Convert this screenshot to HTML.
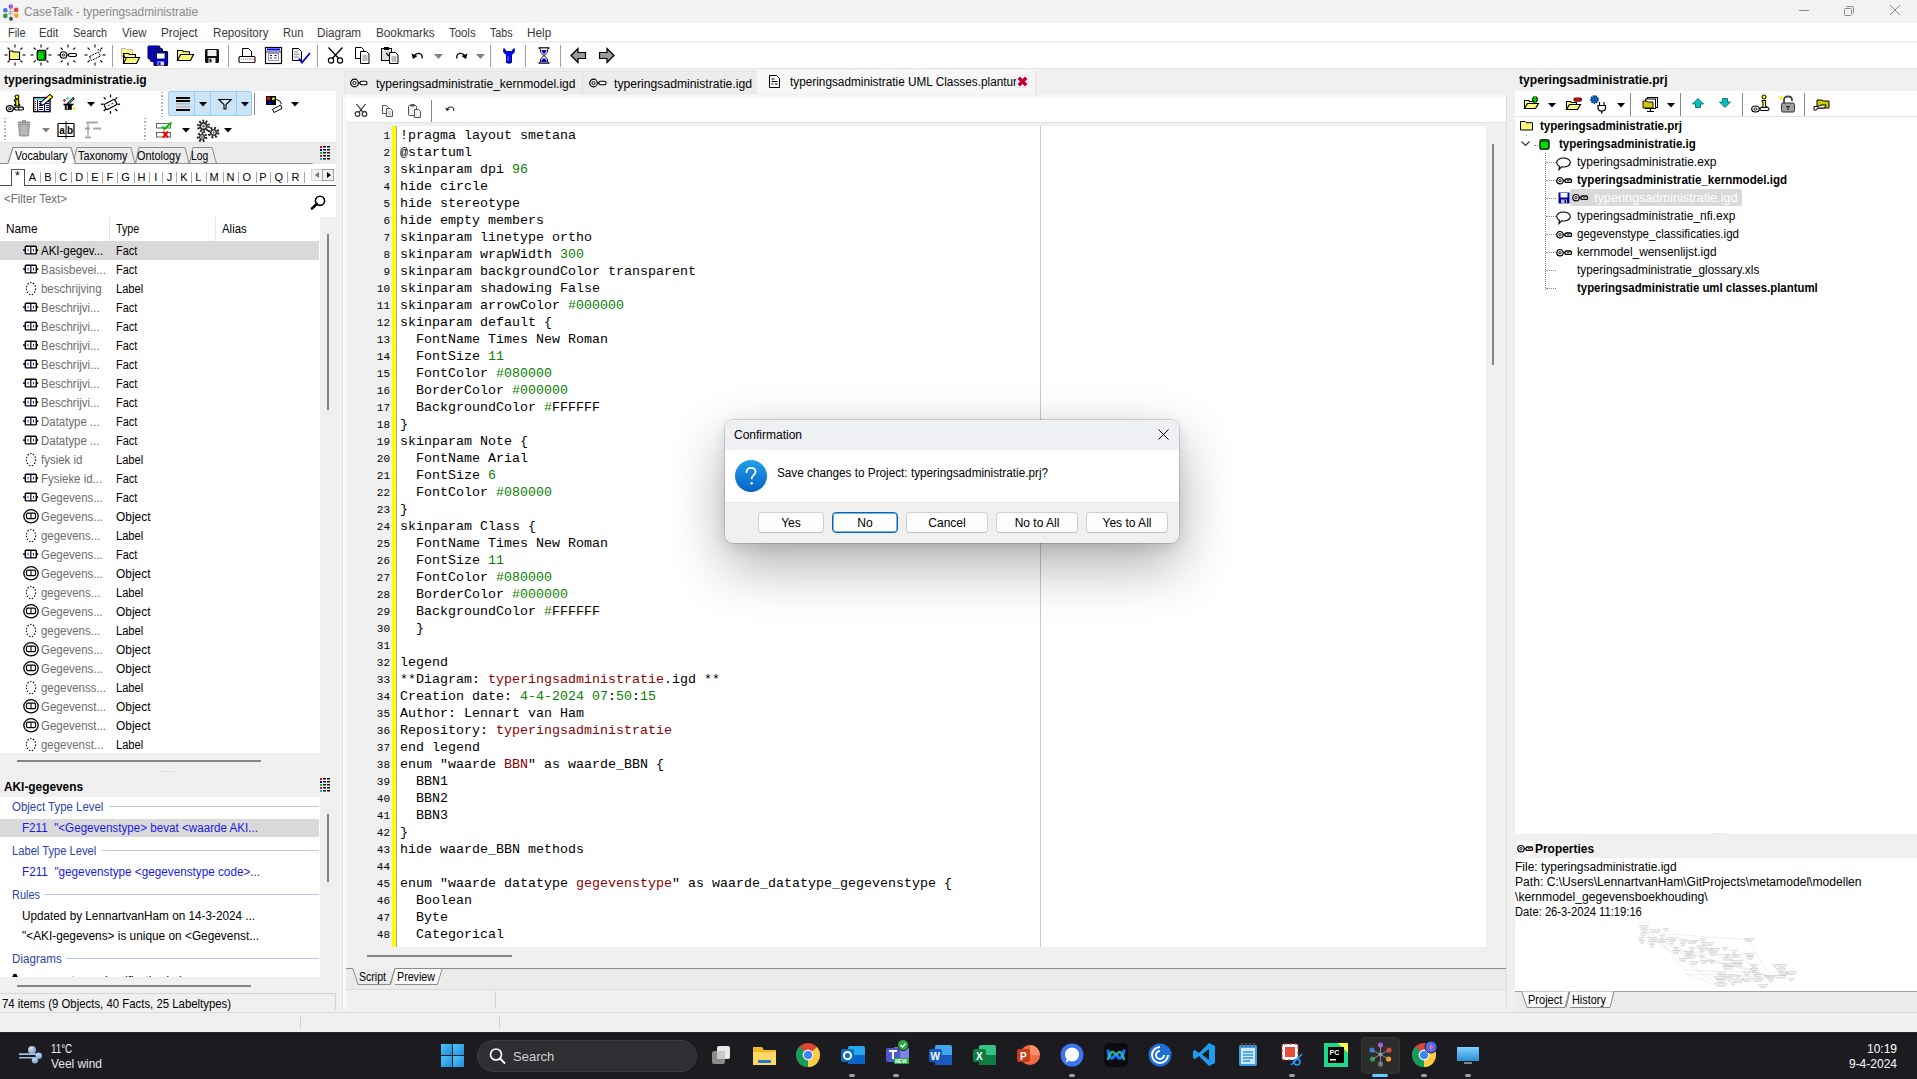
<!DOCTYPE html>
<html><head><meta charset="utf-8">
<style>
*{margin:0;padding:0;box-sizing:border-box}
html,body{width:1917px;height:1079px;overflow:hidden;background:#f0f0f0;font-family:"Liberation Sans",sans-serif;font-size:12px;color:#000;position:relative}
.a{position:absolute}
.t{position:absolute;white-space:pre;line-height:1}
svg{overflow:visible}
</style></head><body>

<div class="a" style="left:0px;top:0px;width:1917px;height:23px;background:#f3f3f3"></div>
<svg class="a" style="left:1px;top:2px;" width="19" height="19" viewBox="0 0 19 19"><g stroke="#bbb" stroke-width="1.2"><path d="M9.5 10.5L9.5 5M9.5 10.5L4.5 8.3M9.5 10.5L14.8 8.3M9.5 10.5L4.5 13.8M9.5 10.5L14.8 13.8M9.5 10.5L9.5 16"/></g><circle cx="9.8" cy="4.6" r="2.3" fill="#a25bd6"/><circle cx="4.3" cy="8.2" r="2.3" fill="#3d7be0"/><circle cx="15.2" cy="7.9" r="2.3" fill="#e0443a"/><circle cx="4.3" cy="13.9" r="2.3" fill="#2f9e44"/><circle cx="15.4" cy="13.6" r="2.3" fill="#f5a623"/><circle cx="10" cy="16.8" r="2.1" fill="#555"/></svg>
<div class="t " style="left:24px;top:5.84px;font-size:12px;color:#8a8a8a;transform:scaleX(0.9845);transform-origin:0 0;">CaseTalk - typeringsadministratie</div>
<div class="a" style="left:1799px;top:10px;width:10px;height:1px;background:#8a8a8a"></div>
<svg class="a" style="left:1843px;top:5px;" width="12" height="12" viewBox="0 0 12 12"><rect x="1.5" y="3.5" width="7" height="7" rx="1" fill="none" stroke="#8a8a8a" stroke-width="1"/><path d="M3.5 1.5 H9.5 Q10.5 1.5 10.5 2.5 V8.5" fill="none" stroke="#8a8a8a" stroke-width="1"/></svg>
<svg class="a" style="left:1889px;top:4px;" width="12" height="12" viewBox="0 0 12 12"><path d="M1 1 L11 11 M11 1 L1 11" stroke="#8a8a8a" stroke-width="1"/></svg>
<div class="a" style="left:0px;top:23px;width:1917px;height:18px;background:#fff"></div>
<div class="t " style="left:7.6px;top:26.84px;font-size:12px;color:#3a3a3a;transform:scaleX(0.9047);transform-origin:0 0;">File</div>
<div class="t " style="left:39.4px;top:26.84px;font-size:12px;color:#3a3a3a;transform:scaleX(0.9336);transform-origin:0 0;">Edit</div>
<div class="t " style="left:73.3px;top:26.84px;font-size:12px;color:#3a3a3a;transform:scaleX(0.8944);transform-origin:0 0;">Search</div>
<div class="t " style="left:122.4px;top:26.84px;font-size:12px;color:#3a3a3a;transform:scaleX(0.9459);transform-origin:0 0;">View</div>
<div class="t " style="left:161.4px;top:26.84px;font-size:12px;color:#3a3a3a;transform:scaleX(0.9774);transform-origin:0 0;">Project</div>
<div class="t " style="left:212.5px;top:26.84px;font-size:12px;color:#3a3a3a;transform:scaleX(0.9676);transform-origin:0 0;">Repository</div>
<div class="t " style="left:282.5px;top:26.84px;font-size:12px;color:#3a3a3a;transform:scaleX(0.9266);transform-origin:0 0;">Run</div>
<div class="t " style="left:317.4px;top:26.84px;font-size:12px;color:#3a3a3a;transform:scaleX(0.9722);transform-origin:0 0;">Diagram</div>
<div class="t " style="left:376.4px;top:26.84px;font-size:12px;color:#3a3a3a;transform:scaleX(0.9781);transform-origin:0 0;">Bookmarks</div>
<div class="t " style="left:449.2px;top:26.84px;font-size:12px;color:#3a3a3a;transform:scaleX(0.9495);transform-origin:0 0;">Tools</div>
<div class="t " style="left:490.3px;top:26.84px;font-size:12px;color:#3a3a3a;transform:scaleX(0.8917);transform-origin:0 0;">Tabs</div>
<div class="t " style="left:527.4px;top:26.84px;font-size:12px;color:#3a3a3a;transform:scaleX(0.9843);transform-origin:0 0;">Help</div>
<div class="a" style="left:0px;top:43px;width:1917px;height:25px;background:#fff"></div>
<div class="a" style="left:0px;top:68px;width:1917px;height:1px;background:#e6e6e6"></div>
<svg width="0" height="0" style="position:absolute"><defs><pattern id="yh" width="2" height="2" patternUnits="userSpaceOnUse"><rect width="2" height="2" fill="#ffff00"/><rect width="1" height="1" fill="#fff"/><rect x="1" y="1" width="1" height="1" fill="#fff"/></pattern></defs></svg>
<svg class="a" style="left:4px;top:44px;" width="22" height="22" viewBox="0 0 22 22"><path d="M18.5 11.0L21.5 11.0" stroke="#000" stroke-width="1.1"/><path d="M16.3 16.3L18.4 18.4" stroke="#000" stroke-width="1.1"/><path d="M11.0 18.5L11.0 21.5" stroke="#000" stroke-width="1.1"/><path d="M5.7 16.3L3.6 18.4" stroke="#000" stroke-width="1.1"/><path d="M3.5 11.0L0.5 11.0" stroke="#000" stroke-width="1.1"/><path d="M5.7 5.7L3.6 3.6" stroke="#000" stroke-width="1.1"/><path d="M11.0 3.5L11.0 0.5" stroke="#000" stroke-width="1.1"/><path d="M16.3 5.7L18.4 3.6" stroke="#000" stroke-width="1.1"/><path d="M5.5 7h3l1 1h6v7.5h-10z" fill="url(#yh)" stroke="#000" stroke-width="1.2"/></svg>
<svg class="a" style="left:30px;top:44px;" width="22" height="22" viewBox="0 0 22 22"><path d="M18.5 11.0L21.5 11.0" stroke="#000" stroke-width="1.1"/><path d="M16.3 16.3L18.4 18.4" stroke="#000" stroke-width="1.1"/><path d="M11.0 18.5L11.0 21.5" stroke="#000" stroke-width="1.1"/><path d="M5.7 16.3L3.6 18.4" stroke="#000" stroke-width="1.1"/><path d="M3.5 11.0L0.5 11.0" stroke="#000" stroke-width="1.1"/><path d="M5.7 5.7L3.6 3.6" stroke="#000" stroke-width="1.1"/><path d="M11.0 3.5L11.0 0.5" stroke="#000" stroke-width="1.1"/><path d="M16.3 5.7L18.4 3.6" stroke="#000" stroke-width="1.1"/><rect x="7.3" y="6.5" width="8.4" height="9.6" rx="1.3" fill="#00e000" stroke="#000" stroke-width="1.4"/><rect x="8" y="7.2" width="7" height="1.6" fill="#00a000"/><path d="M14.3 9v6" stroke="#007000" stroke-width="1.4"/></svg>
<svg class="a" style="left:57px;top:44px;" width="22" height="22" viewBox="0 0 22 22"><path d="M16.3 16.3L18.4 18.4" stroke="#000" stroke-width="1.1"/><path d="M11.0 18.5L11.0 21.5" stroke="#000" stroke-width="1.1"/><path d="M5.7 16.3L3.6 18.4" stroke="#000" stroke-width="1.1"/><path d="M3.5 11.0L0.5 11.0" stroke="#000" stroke-width="1.1"/><path d="M5.7 5.7L3.6 3.6" stroke="#000" stroke-width="1.1"/><path d="M11.0 3.5L11.0 0.5" stroke="#000" stroke-width="1.1"/><path d="M16.3 5.7L18.4 3.6" stroke="#000" stroke-width="1.1"/><circle cx="6.5" cy="11" r="3.3" fill="#fff" stroke="#000" stroke-width="1.1"/><ellipse cx="6.5" cy="11" rx="1.5" ry="1" fill="none" stroke="#000" stroke-width="0.9"/><path d="M9.8 11h2" stroke="#000" stroke-width="1.2"/><rect x="11.5" y="9.5" width="8" height="3" rx="1.5" fill="#fff" stroke="#000" stroke-width="1.2"/></svg>
<svg class="a" style="left:84px;top:44px;" width="22" height="22" viewBox="0 0 22 22"><path d="M18.5 11.0L21.5 11.0" stroke="#000" stroke-width="1.1"/><path d="M16.3 16.3L18.4 18.4" stroke="#000" stroke-width="1.1"/><path d="M11.0 18.5L11.0 21.5" stroke="#000" stroke-width="1.1"/><path d="M5.7 16.3L3.6 18.4" stroke="#000" stroke-width="1.1"/><path d="M3.5 11.0L0.5 11.0" stroke="#000" stroke-width="1.1"/><path d="M5.7 5.7L3.6 3.6" stroke="#000" stroke-width="1.1"/><path d="M11.0 3.5L11.0 0.5" stroke="#000" stroke-width="1.1"/><path d="M16.3 5.7L18.4 3.6" stroke="#000" stroke-width="1.1"/><path d="M5.5 12.5L14.5 8L16.5 12L7.5 16.5z" fill="none" stroke="#000" stroke-width="1" stroke-dasharray="2 1"/><path d="M13.5 6Q16 5 16.5 7.5" fill="none" stroke="#000" stroke-width="1" stroke-dasharray="1.5 1"/></svg>
<div class="a" style="left:112px;top:45px;width:1px;height:22px;background:#a0a0a0"></div>
<svg class="a" style="left:120px;top:46px;" width="22" height="20" viewBox="0 0 22 20"><path d="M1.5 2.5h4l1 1h6v7h-11z" fill="url(#yh)" stroke="#bbb" stroke-width="1"/><path d="M3.5 7.5h5l1 1h6v3h-11z" fill="url(#yh)" stroke="#000" stroke-width="1.1"/><path d="M3.5 17.5L6.5 11.5h13l-3 6z" fill="url(#yh)" stroke="#000" stroke-width="1.2"/><path d="M3.5 17.5v-10" stroke="#000" stroke-width="1.1"/></svg>
<svg class="a" style="left:147px;top:45px;" width="23" height="22" viewBox="0 0 23 22"><rect x="1" y="1" width="12" height="13" rx="1" fill="#0000ff" stroke="#000" stroke-width="1"/><rect x="3.5" y="3.5" width="12" height="13" rx="1" fill="#0000ff" stroke="#000" stroke-width="1"/><rect x="7" y="6.5" width="13.5" height="14" rx="1" fill="#0000ff" stroke="#000" stroke-width="1.2"/><rect x="9.5" y="8" width="8.5" height="6" fill="#fff" stroke="#000" stroke-width="0.8"/><rect x="10.5" y="16.5" width="6.5" height="4" fill="#ddd"/><rect x="11.5" y="17.2" width="2" height="2.8" fill="#0000cc"/></svg>
<svg class="a" style="left:176px;top:48px;" width="19" height="15" viewBox="0 0 19 15"><path d="M1.5 12.5V2.5h5l1 1.2h6v2.8" fill="url(#yh)" stroke="#000" stroke-width="1.1"/><path d="M1.5 12.5L4.5 6.5h13l-3 6z" fill="url(#yh)" stroke="#000" stroke-width="1.2"/></svg>
<svg class="a" style="left:204px;top:48px;" width="16" height="16" viewBox="0 0 16 16"><rect x="1" y="1" width="14" height="14" rx="1.5" fill="#111"/><rect x="3.5" y="2" width="9" height="6" fill="#eee"/><rect x="4.5" y="10" width="7" height="5" fill="#eee"/><rect x="5.5" y="10.8" width="2" height="3.5" fill="#111"/></svg>
<div class="a" style="left:228px;top:45px;width:1px;height:22px;background:#a0a0a0"></div>
<svg class="a" style="left:238px;top:47px;" width="18" height="18" viewBox="0 0 18 18"><path d="M4.5 1.5h6l3 3v5h-9z" fill="#fff" stroke="#000" stroke-width="1"/><rect x="1" y="9.5" width="16" height="6" rx="1" fill="#fff" stroke="#000" stroke-width="1.1"/><path d="M3 12h9" stroke="#777" stroke-width="1" stroke-dasharray="1 1"/><path d="M12.5 12h3" stroke="#e00000" stroke-width="1.2" stroke-dasharray="1 1"/><path d="M2 15.5h14" stroke="#333" stroke-width="1"/></svg>
<svg class="a" style="left:265px;top:47px;" width="18" height="18" viewBox="0 0 18 18"><rect x="0.5" y="0.5" width="16" height="16" fill="#fff" stroke="#000" stroke-width="1.2"/><rect x="2" y="1.5" width="13" height="2" fill="#0000ff"/><path d="M1 5h15" stroke="#000" stroke-width="0.8"/><rect x="3.5" y="6.5" width="10" height="7" fill="none" stroke="#777" stroke-width="0.8"/><path d="M5 8.5h2M9.5 8.5h2M5 11h2M9.5 11h2" stroke="#0000ff" stroke-width="1.1"/></svg>
<svg class="a" style="left:291px;top:47px;" width="21" height="18" viewBox="0 0 21 18"><path d="M1.5 1.5h6l3 3v9h-9z" fill="#eee" stroke="#000" stroke-width="1"/><path d="M3 5h4M3 7.5h5M3 10h5" stroke="#888" stroke-width="0.9"/><path d="M8 11.5L11 15.5L19 6" fill="none" stroke="#0000cc" stroke-width="1.8"/></svg>
<div class="a" style="left:317px;top:45px;width:1px;height:22px;background:#a0a0a0"></div>
<svg class="a" style="left:327px;top:46px;" width="18" height="19" viewBox="0 0 18 19"><circle cx="4" cy="14.5" r="2.6" fill="none" stroke="#000" stroke-width="1.2"/><circle cx="13" cy="14.5" r="2.6" fill="none" stroke="#000" stroke-width="1.2"/><path d="M5.5 12.3L15.5 1.5M11.5 12.3L1.5 1.5" stroke="#000" stroke-width="1.3"/></svg>
<svg class="a" style="left:354px;top:46px;" width="17" height="19" viewBox="0 0 17 19"><path d="M1.5 1.5h6l2 2v9h-8z" fill="#fff" stroke="#000" stroke-width="1"/><path d="M6.5 5.5h6l2.5 2.5v9.5h-8.5z" fill="#fff" stroke="#000" stroke-width="1"/><path d="M8.5 10h5M8.5 12h5M8.5 14h5" stroke="#555" stroke-width="0.8"/></svg>
<svg class="a" style="left:380px;top:46px;" width="20" height="19" viewBox="0 0 20 19"><rect x="1.5" y="2.5" width="10" height="12" fill="#ddd" stroke="#000" stroke-width="1"/><rect x="4" y="1" width="5" height="3" fill="#000"/><path d="M9.5 6.5h6l2.5 2.5v8.5h-8.5z" fill="#fff" stroke="#000" stroke-width="1"/><path d="M11.5 11h5M11.5 13h5M11.5 15h5" stroke="#555" stroke-width="0.8"/><path d="M6 7l3 3" stroke="#000" stroke-width="1.3"/></svg>
<svg class="a" style="left:411px;top:51px;" width="14" height="10" viewBox="0 0 14 10"><path d="M3 5Q5 2 8.5 2.5Q12 3.5 11 7.5" fill="none" stroke="#000" stroke-width="1.3"/><path d="M0.5 2.5L2 8L6.5 5z" fill="#000"/></svg>
<svg class="a" style="left:434px;top:54px;" width="9" height="5" viewBox="0 0 9 5"><path d="M0 0h9L4.5 5z" fill="#808080"/></svg>
<svg class="a" style="left:454px;top:51px;" width="14" height="10" viewBox="0 0 14 10"><path d="M11 5Q9 2 5.5 2.5Q2 3.5 3 7.5" fill="none" stroke="#000" stroke-width="1.3"/><path d="M13.5 2.5L12 8L7.5 5z" fill="#000"/></svg>
<svg class="a" style="left:476px;top:54px;" width="9" height="5" viewBox="0 0 9 5"><path d="M0 0h9L4.5 5z" fill="#808080"/></svg>
<div class="a" style="left:490px;top:45px;width:1px;height:22px;background:#a0a0a0"></div>
<svg class="a" style="left:502px;top:47px;" width="14" height="17" viewBox="0 0 14 17"><path d="M2 1.5Q0.5 6 4.5 7.5V15.5Q7 17 9.5 15.5V7.5Q13.5 6 12 1.5L9.5 4.5H4.5z" fill="#0000ff" stroke="#000080" stroke-width="1"/><path d="M6 9v5" stroke="#8080ff" stroke-width="1"/></svg>
<div class="a" style="left:525px;top:45px;width:1px;height:22px;background:#a0a0a0"></div>
<svg class="a" style="left:538px;top:47px;" width="12" height="17" viewBox="0 0 12 17"><path d="M0.5 1h11M0.5 16h11" stroke="#000" stroke-width="1.6"/><path d="M2 1.5Q2 6 6 8.5Q10 6 10 1.5M2 15.5Q2 11 6 8.5Q10 11 10 15.5" fill="#fff" stroke="#000" stroke-width="1"/><path d="M3 15.2Q3.5 12 6 11Q8.5 12 9 15.2z" fill="#0000cc"/><path d="M3.5 3Q4 5.5 6 7Q8 5.5 8.5 3z" fill="#0000cc"/></svg>
<div class="a" style="left:560px;top:45px;width:1px;height:22px;background:#a0a0a0"></div>
<svg class="a" style="left:570px;top:47px;" width="17" height="17" viewBox="0 0 17 17"><path d="M1 8.5L8 1.5V5.5H15.5V11.5H8V15.5z" fill="#9a9a9a" stroke="#000" stroke-width="1.2"/></svg>
<svg class="a" style="left:598px;top:47px;" width="17" height="17" viewBox="0 0 17 17"><path d="M16 8.5L9 1.5V5.5H1.5V11.5H9V15.5z" fill="#9a9a9a" stroke="#000" stroke-width="1.2"/></svg>
<div class="t " style="left:4px;top:73.84px;font-size:12px;color:#000;font-weight:bold;">typeringsadministratie.ig</div>
<div class="a" style="left:0px;top:91px;width:336px;height:51px;background:#fff"></div>
<div class="a" style="left:336px;top:69px;width:6px;height:943px;background:#f0f0f0"></div>
<div class="a" style="left:0px;top:142px;width:336px;height:22px;background:#ececec"></div>
<div class="a" style="left:0px;top:163px;width:320px;height:1px;background:#a0a0a0"></div>
<div class="a" style="left:0px;top:164px;width:336px;height:22px;background:#fff"></div>
<div class="a" style="left:0px;top:185px;width:336px;height:1px;background:#5a5a5a"></div>
<div class="a" style="left:0px;top:186px;width:336px;height:31px;background:#fff"></div>
<div class="t " style="left:4px;top:192.84px;font-size:12px;color:#6d6d6d;transform:scaleX(0.9573);transform-origin:0 0;">&lt;Filter Text&gt;</div>
<div class="a" style="left:0px;top:217px;width:320px;height:24px;background:#fff"></div>
<div class="a" style="left:215px;top:217px;width:1px;height:24px;background:#e5e5e5"></div>
<div class="a" style="left:109px;top:217px;width:1px;height:24px;background:#e5e5e5"></div>
<div class="t " style="left:6px;top:222.84px;font-size:12px;color:#000;transform:scaleX(0.9839);transform-origin:0 0;">Name</div>
<div class="t " style="left:116px;top:222.84px;font-size:12px;color:#000;transform:scaleX(0.8956);transform-origin:0 0;">Type</div>
<div class="t " style="left:222px;top:222.84px;font-size:12px;color:#000;transform:scaleX(0.9494);transform-origin:0 0;">Alias</div>
<div class="a" style="left:0px;top:241px;width:320px;height:512px;background:#fff"></div>
<div class="a" style="left:320px;top:217px;width:16px;height:536px;background:#f0f0f0"></div>
<div class="a" style="left:327px;top:234px;width:2px;height:176px;background:#858585"></div>
<div class="a" style="left:0px;top:241px;width:319px;height:19px;background:#d9d9d9"></div>
<svg class="a" style="left:23px;top:244px;" width="17" height="13" viewBox="0 0 17 13"><rect x="2.3" y="2.3" width="11" height="7.6" rx="0.8" fill="#fff" stroke="#000" stroke-width="1.4"/><path d="M7.8 2.5v7.2" stroke="#000" stroke-width="1.2"/><path d="M0 6.1h2.3" stroke="#000" stroke-width="1.4"/><path d="M13.3 4.3L15.6 6.1L13.3 7.9z" fill="#000"/><path d="M5 4.8v2.6M10.5 4.8v2.6" stroke="#2020c0" stroke-width="1"/></svg>
<div class="t " style="left:41px;top:244.84px;font-size:12px;color:#000;transform:scaleX(0.9550);transform-origin:0 0;">AKI-gegev...</div>
<div class="t " style="left:116px;top:244.84px;font-size:12px;color:#000;transform:scaleX(0.9131);transform-origin:0 0;">Fact</div>
<svg class="a" style="left:23px;top:263px;" width="17" height="13" viewBox="0 0 17 13"><rect x="2.3" y="2.3" width="11" height="7.6" rx="0.8" fill="#fff" stroke="#000" stroke-width="1.4"/><path d="M7.8 2.5v7.2" stroke="#000" stroke-width="1.2"/><path d="M0 6.1h2.3" stroke="#000" stroke-width="1.4"/><path d="M13.3 4.3L15.6 6.1L13.3 7.9z" fill="#000"/><path d="M5 4.8v2.6M10.5 4.8v2.6" stroke="#2020c0" stroke-width="1"/></svg>
<div class="t " style="left:41px;top:263.84px;font-size:12px;color:#6d6d6d;transform:scaleX(0.9550);transform-origin:0 0;">Basisbevei...</div>
<div class="t " style="left:116px;top:263.84px;font-size:12px;color:#000;transform:scaleX(0.9131);transform-origin:0 0;">Fact</div>
<svg class="a" style="left:23px;top:282px;" width="17" height="13" viewBox="0 0 17 13"><ellipse cx="8" cy="6.6" rx="4.6" ry="6.2" fill="none" stroke="#000" stroke-width="1.1" stroke-dasharray="1.4 1.6"/></svg>
<div class="t " style="left:41px;top:282.84px;font-size:12px;color:#6d6d6d;transform:scaleX(0.9550);transform-origin:0 0;">beschrijving</div>
<div class="t " style="left:116px;top:282.84px;font-size:12px;color:#000;transform:scaleX(0.9265);transform-origin:0 0;">Label</div>
<svg class="a" style="left:23px;top:301px;" width="17" height="13" viewBox="0 0 17 13"><rect x="2.3" y="2.3" width="11" height="7.6" rx="0.8" fill="#fff" stroke="#000" stroke-width="1.4"/><path d="M7.8 2.5v7.2" stroke="#000" stroke-width="1.2"/><path d="M0 6.1h2.3" stroke="#000" stroke-width="1.4"/><path d="M13.3 4.3L15.6 6.1L13.3 7.9z" fill="#000"/><path d="M5 4.8v2.6M10.5 4.8v2.6" stroke="#2020c0" stroke-width="1"/></svg>
<div class="t " style="left:41px;top:301.84px;font-size:12px;color:#6d6d6d;transform:scaleX(0.9550);transform-origin:0 0;">Beschrijvi...</div>
<div class="t " style="left:116px;top:301.84px;font-size:12px;color:#000;transform:scaleX(0.9131);transform-origin:0 0;">Fact</div>
<svg class="a" style="left:23px;top:320px;" width="17" height="13" viewBox="0 0 17 13"><rect x="2.3" y="2.3" width="11" height="7.6" rx="0.8" fill="#fff" stroke="#000" stroke-width="1.4"/><path d="M7.8 2.5v7.2" stroke="#000" stroke-width="1.2"/><path d="M0 6.1h2.3" stroke="#000" stroke-width="1.4"/><path d="M13.3 4.3L15.6 6.1L13.3 7.9z" fill="#000"/><path d="M5 4.8v2.6M10.5 4.8v2.6" stroke="#2020c0" stroke-width="1"/></svg>
<div class="t " style="left:41px;top:320.84px;font-size:12px;color:#6d6d6d;transform:scaleX(0.9550);transform-origin:0 0;">Beschrijvi...</div>
<div class="t " style="left:116px;top:320.84px;font-size:12px;color:#000;transform:scaleX(0.9131);transform-origin:0 0;">Fact</div>
<svg class="a" style="left:23px;top:339px;" width="17" height="13" viewBox="0 0 17 13"><rect x="2.3" y="2.3" width="11" height="7.6" rx="0.8" fill="#fff" stroke="#000" stroke-width="1.4"/><path d="M7.8 2.5v7.2" stroke="#000" stroke-width="1.2"/><path d="M0 6.1h2.3" stroke="#000" stroke-width="1.4"/><path d="M13.3 4.3L15.6 6.1L13.3 7.9z" fill="#000"/><path d="M5 4.8v2.6M10.5 4.8v2.6" stroke="#2020c0" stroke-width="1"/></svg>
<div class="t " style="left:41px;top:339.84px;font-size:12px;color:#6d6d6d;transform:scaleX(0.9550);transform-origin:0 0;">Beschrijvi...</div>
<div class="t " style="left:116px;top:339.84px;font-size:12px;color:#000;transform:scaleX(0.9131);transform-origin:0 0;">Fact</div>
<svg class="a" style="left:23px;top:358px;" width="17" height="13" viewBox="0 0 17 13"><rect x="2.3" y="2.3" width="11" height="7.6" rx="0.8" fill="#fff" stroke="#000" stroke-width="1.4"/><path d="M7.8 2.5v7.2" stroke="#000" stroke-width="1.2"/><path d="M0 6.1h2.3" stroke="#000" stroke-width="1.4"/><path d="M13.3 4.3L15.6 6.1L13.3 7.9z" fill="#000"/><path d="M5 4.8v2.6M10.5 4.8v2.6" stroke="#2020c0" stroke-width="1"/></svg>
<div class="t " style="left:41px;top:358.84px;font-size:12px;color:#6d6d6d;transform:scaleX(0.9550);transform-origin:0 0;">Beschrijvi...</div>
<div class="t " style="left:116px;top:358.84px;font-size:12px;color:#000;transform:scaleX(0.9131);transform-origin:0 0;">Fact</div>
<svg class="a" style="left:23px;top:377px;" width="17" height="13" viewBox="0 0 17 13"><rect x="2.3" y="2.3" width="11" height="7.6" rx="0.8" fill="#fff" stroke="#000" stroke-width="1.4"/><path d="M7.8 2.5v7.2" stroke="#000" stroke-width="1.2"/><path d="M0 6.1h2.3" stroke="#000" stroke-width="1.4"/><path d="M13.3 4.3L15.6 6.1L13.3 7.9z" fill="#000"/><path d="M5 4.8v2.6M10.5 4.8v2.6" stroke="#2020c0" stroke-width="1"/></svg>
<div class="t " style="left:41px;top:377.84px;font-size:12px;color:#6d6d6d;transform:scaleX(0.9550);transform-origin:0 0;">Beschrijvi...</div>
<div class="t " style="left:116px;top:377.84px;font-size:12px;color:#000;transform:scaleX(0.9131);transform-origin:0 0;">Fact</div>
<svg class="a" style="left:23px;top:396px;" width="17" height="13" viewBox="0 0 17 13"><rect x="2.3" y="2.3" width="11" height="7.6" rx="0.8" fill="#fff" stroke="#000" stroke-width="1.4"/><path d="M7.8 2.5v7.2" stroke="#000" stroke-width="1.2"/><path d="M0 6.1h2.3" stroke="#000" stroke-width="1.4"/><path d="M13.3 4.3L15.6 6.1L13.3 7.9z" fill="#000"/><path d="M5 4.8v2.6M10.5 4.8v2.6" stroke="#2020c0" stroke-width="1"/></svg>
<div class="t " style="left:41px;top:396.84px;font-size:12px;color:#6d6d6d;transform:scaleX(0.9550);transform-origin:0 0;">Beschrijvi...</div>
<div class="t " style="left:116px;top:396.84px;font-size:12px;color:#000;transform:scaleX(0.9131);transform-origin:0 0;">Fact</div>
<svg class="a" style="left:23px;top:415px;" width="17" height="13" viewBox="0 0 17 13"><rect x="2.3" y="2.3" width="11" height="7.6" rx="0.8" fill="#fff" stroke="#000" stroke-width="1.4"/><path d="M7.8 2.5v7.2" stroke="#000" stroke-width="1.2"/><path d="M0 6.1h2.3" stroke="#000" stroke-width="1.4"/><path d="M13.3 4.3L15.6 6.1L13.3 7.9z" fill="#000"/><path d="M5 4.8v2.6M10.5 4.8v2.6" stroke="#2020c0" stroke-width="1"/></svg>
<div class="t " style="left:41px;top:415.84px;font-size:12px;color:#6d6d6d;transform:scaleX(0.9550);transform-origin:0 0;">Datatype ...</div>
<div class="t " style="left:116px;top:415.84px;font-size:12px;color:#000;transform:scaleX(0.9131);transform-origin:0 0;">Fact</div>
<svg class="a" style="left:23px;top:434px;" width="17" height="13" viewBox="0 0 17 13"><rect x="2.3" y="2.3" width="11" height="7.6" rx="0.8" fill="#fff" stroke="#000" stroke-width="1.4"/><path d="M7.8 2.5v7.2" stroke="#000" stroke-width="1.2"/><path d="M0 6.1h2.3" stroke="#000" stroke-width="1.4"/><path d="M13.3 4.3L15.6 6.1L13.3 7.9z" fill="#000"/><path d="M5 4.8v2.6M10.5 4.8v2.6" stroke="#2020c0" stroke-width="1"/></svg>
<div class="t " style="left:41px;top:434.84px;font-size:12px;color:#6d6d6d;transform:scaleX(0.9550);transform-origin:0 0;">Datatype ...</div>
<div class="t " style="left:116px;top:434.84px;font-size:12px;color:#000;transform:scaleX(0.9131);transform-origin:0 0;">Fact</div>
<svg class="a" style="left:23px;top:453px;" width="17" height="13" viewBox="0 0 17 13"><ellipse cx="8" cy="6.6" rx="4.6" ry="6.2" fill="none" stroke="#000" stroke-width="1.1" stroke-dasharray="1.4 1.6"/></svg>
<div class="t " style="left:41px;top:453.84px;font-size:12px;color:#6d6d6d;transform:scaleX(0.9550);transform-origin:0 0;">fysiek id</div>
<div class="t " style="left:116px;top:453.84px;font-size:12px;color:#000;transform:scaleX(0.9265);transform-origin:0 0;">Label</div>
<svg class="a" style="left:23px;top:472px;" width="17" height="13" viewBox="0 0 17 13"><rect x="2.3" y="2.3" width="11" height="7.6" rx="0.8" fill="#fff" stroke="#000" stroke-width="1.4"/><path d="M7.8 2.5v7.2" stroke="#000" stroke-width="1.2"/><path d="M0 6.1h2.3" stroke="#000" stroke-width="1.4"/><path d="M13.3 4.3L15.6 6.1L13.3 7.9z" fill="#000"/><path d="M5 4.8v2.6M10.5 4.8v2.6" stroke="#2020c0" stroke-width="1"/></svg>
<div class="t " style="left:41px;top:472.84px;font-size:12px;color:#6d6d6d;transform:scaleX(0.9550);transform-origin:0 0;">Fysieke id...</div>
<div class="t " style="left:116px;top:472.84px;font-size:12px;color:#000;transform:scaleX(0.9131);transform-origin:0 0;">Fact</div>
<svg class="a" style="left:23px;top:491px;" width="17" height="13" viewBox="0 0 17 13"><rect x="2.3" y="2.3" width="11" height="7.6" rx="0.8" fill="#fff" stroke="#000" stroke-width="1.4"/><path d="M7.8 2.5v7.2" stroke="#000" stroke-width="1.2"/><path d="M0 6.1h2.3" stroke="#000" stroke-width="1.4"/><path d="M13.3 4.3L15.6 6.1L13.3 7.9z" fill="#000"/><path d="M5 4.8v2.6M10.5 4.8v2.6" stroke="#2020c0" stroke-width="1"/></svg>
<div class="t " style="left:41px;top:491.84px;font-size:12px;color:#6d6d6d;transform:scaleX(0.9550);transform-origin:0 0;">Gegevens...</div>
<div class="t " style="left:116px;top:491.84px;font-size:12px;color:#000;transform:scaleX(0.9131);transform-origin:0 0;">Fact</div>
<svg class="a" style="left:23px;top:510px;" width="17" height="13" viewBox="0 0 17 13"><ellipse cx="8" cy="6.3" rx="7.2" ry="6.6" fill="#fff" stroke="#000" stroke-width="1.3"/><rect x="3.5" y="3.2" width="9" height="5.4" rx="1.3" fill="#fff" stroke="#000" stroke-width="1.2"/><path d="M8 3.2v5.4" stroke="#000" stroke-width="1.1"/></svg>
<div class="t " style="left:41px;top:510.84px;font-size:12px;color:#6d6d6d;transform:scaleX(0.9550);transform-origin:0 0;">Gegevens...</div>
<div class="t " style="left:116px;top:510.84px;font-size:12px;color:#000;transform:scaleX(0.9950);transform-origin:0 0;">Object</div>
<svg class="a" style="left:23px;top:529px;" width="17" height="13" viewBox="0 0 17 13"><ellipse cx="8" cy="6.6" rx="4.6" ry="6.2" fill="none" stroke="#000" stroke-width="1.1" stroke-dasharray="1.4 1.6"/></svg>
<div class="t " style="left:41px;top:529.84px;font-size:12px;color:#6d6d6d;transform:scaleX(0.9550);transform-origin:0 0;">gegevens...</div>
<div class="t " style="left:116px;top:529.84px;font-size:12px;color:#000;transform:scaleX(0.9265);transform-origin:0 0;">Label</div>
<svg class="a" style="left:23px;top:548px;" width="17" height="13" viewBox="0 0 17 13"><rect x="2.3" y="2.3" width="11" height="7.6" rx="0.8" fill="#fff" stroke="#000" stroke-width="1.4"/><path d="M7.8 2.5v7.2" stroke="#000" stroke-width="1.2"/><path d="M0 6.1h2.3" stroke="#000" stroke-width="1.4"/><path d="M13.3 4.3L15.6 6.1L13.3 7.9z" fill="#000"/><path d="M5 4.8v2.6M10.5 4.8v2.6" stroke="#2020c0" stroke-width="1"/></svg>
<div class="t " style="left:41px;top:548.84px;font-size:12px;color:#6d6d6d;transform:scaleX(0.9550);transform-origin:0 0;">Gegevens...</div>
<div class="t " style="left:116px;top:548.84px;font-size:12px;color:#000;transform:scaleX(0.9131);transform-origin:0 0;">Fact</div>
<svg class="a" style="left:23px;top:567px;" width="17" height="13" viewBox="0 0 17 13"><ellipse cx="8" cy="6.3" rx="7.2" ry="6.6" fill="#fff" stroke="#000" stroke-width="1.3"/><rect x="3.5" y="3.2" width="9" height="5.4" rx="1.3" fill="#fff" stroke="#000" stroke-width="1.2"/><path d="M8 3.2v5.4" stroke="#000" stroke-width="1.1"/></svg>
<div class="t " style="left:41px;top:567.84px;font-size:12px;color:#6d6d6d;transform:scaleX(0.9550);transform-origin:0 0;">Gegevens...</div>
<div class="t " style="left:116px;top:567.84px;font-size:12px;color:#000;transform:scaleX(0.9950);transform-origin:0 0;">Object</div>
<svg class="a" style="left:23px;top:586px;" width="17" height="13" viewBox="0 0 17 13"><ellipse cx="8" cy="6.6" rx="4.6" ry="6.2" fill="none" stroke="#000" stroke-width="1.1" stroke-dasharray="1.4 1.6"/></svg>
<div class="t " style="left:41px;top:586.84px;font-size:12px;color:#6d6d6d;transform:scaleX(0.9550);transform-origin:0 0;">gegevens...</div>
<div class="t " style="left:116px;top:586.84px;font-size:12px;color:#000;transform:scaleX(0.9265);transform-origin:0 0;">Label</div>
<svg class="a" style="left:23px;top:605px;" width="17" height="13" viewBox="0 0 17 13"><ellipse cx="8" cy="6.3" rx="7.2" ry="6.6" fill="#fff" stroke="#000" stroke-width="1.3"/><rect x="3.5" y="3.2" width="9" height="5.4" rx="1.3" fill="#fff" stroke="#000" stroke-width="1.2"/><path d="M8 3.2v5.4" stroke="#000" stroke-width="1.1"/></svg>
<div class="t " style="left:41px;top:605.84px;font-size:12px;color:#6d6d6d;transform:scaleX(0.9550);transform-origin:0 0;">Gegevens...</div>
<div class="t " style="left:116px;top:605.84px;font-size:12px;color:#000;transform:scaleX(0.9950);transform-origin:0 0;">Object</div>
<svg class="a" style="left:23px;top:624px;" width="17" height="13" viewBox="0 0 17 13"><ellipse cx="8" cy="6.6" rx="4.6" ry="6.2" fill="none" stroke="#000" stroke-width="1.1" stroke-dasharray="1.4 1.6"/></svg>
<div class="t " style="left:41px;top:624.84px;font-size:12px;color:#6d6d6d;transform:scaleX(0.9550);transform-origin:0 0;">gegevens...</div>
<div class="t " style="left:116px;top:624.84px;font-size:12px;color:#000;transform:scaleX(0.9265);transform-origin:0 0;">Label</div>
<svg class="a" style="left:23px;top:643px;" width="17" height="13" viewBox="0 0 17 13"><ellipse cx="8" cy="6.3" rx="7.2" ry="6.6" fill="#fff" stroke="#000" stroke-width="1.3"/><rect x="3.5" y="3.2" width="9" height="5.4" rx="1.3" fill="#fff" stroke="#000" stroke-width="1.2"/><path d="M8 3.2v5.4" stroke="#000" stroke-width="1.1"/></svg>
<div class="t " style="left:41px;top:643.84px;font-size:12px;color:#6d6d6d;transform:scaleX(0.9550);transform-origin:0 0;">Gegevens...</div>
<div class="t " style="left:116px;top:643.84px;font-size:12px;color:#000;transform:scaleX(0.9950);transform-origin:0 0;">Object</div>
<svg class="a" style="left:23px;top:662px;" width="17" height="13" viewBox="0 0 17 13"><ellipse cx="8" cy="6.3" rx="7.2" ry="6.6" fill="#fff" stroke="#000" stroke-width="1.3"/><rect x="3.5" y="3.2" width="9" height="5.4" rx="1.3" fill="#fff" stroke="#000" stroke-width="1.2"/><path d="M8 3.2v5.4" stroke="#000" stroke-width="1.1"/></svg>
<div class="t " style="left:41px;top:662.84px;font-size:12px;color:#6d6d6d;transform:scaleX(0.9550);transform-origin:0 0;">Gegevens...</div>
<div class="t " style="left:116px;top:662.84px;font-size:12px;color:#000;transform:scaleX(0.9950);transform-origin:0 0;">Object</div>
<svg class="a" style="left:23px;top:681px;" width="17" height="13" viewBox="0 0 17 13"><ellipse cx="8" cy="6.6" rx="4.6" ry="6.2" fill="none" stroke="#000" stroke-width="1.1" stroke-dasharray="1.4 1.6"/></svg>
<div class="t " style="left:41px;top:681.84px;font-size:12px;color:#6d6d6d;transform:scaleX(0.9550);transform-origin:0 0;">gegevenss...</div>
<div class="t " style="left:116px;top:681.84px;font-size:12px;color:#000;transform:scaleX(0.9265);transform-origin:0 0;">Label</div>
<svg class="a" style="left:23px;top:700px;" width="17" height="13" viewBox="0 0 17 13"><ellipse cx="8" cy="6.3" rx="7.2" ry="6.6" fill="#fff" stroke="#000" stroke-width="1.3"/><rect x="3.5" y="3.2" width="9" height="5.4" rx="1.3" fill="#fff" stroke="#000" stroke-width="1.2"/><path d="M8 3.2v5.4" stroke="#000" stroke-width="1.1"/></svg>
<div class="t " style="left:41px;top:700.84px;font-size:12px;color:#6d6d6d;transform:scaleX(0.9550);transform-origin:0 0;">Gegevenst...</div>
<div class="t " style="left:116px;top:700.84px;font-size:12px;color:#000;transform:scaleX(0.9950);transform-origin:0 0;">Object</div>
<svg class="a" style="left:23px;top:719px;" width="17" height="13" viewBox="0 0 17 13"><ellipse cx="8" cy="6.3" rx="7.2" ry="6.6" fill="#fff" stroke="#000" stroke-width="1.3"/><rect x="3.5" y="3.2" width="9" height="5.4" rx="1.3" fill="#fff" stroke="#000" stroke-width="1.2"/><path d="M8 3.2v5.4" stroke="#000" stroke-width="1.1"/></svg>
<div class="t " style="left:41px;top:719.84px;font-size:12px;color:#6d6d6d;transform:scaleX(0.9550);transform-origin:0 0;">Gegevenst...</div>
<div class="t " style="left:116px;top:719.84px;font-size:12px;color:#000;transform:scaleX(0.9950);transform-origin:0 0;">Object</div>
<svg class="a" style="left:23px;top:738px;" width="17" height="13" viewBox="0 0 17 13"><ellipse cx="8" cy="6.6" rx="4.6" ry="6.2" fill="none" stroke="#000" stroke-width="1.1" stroke-dasharray="1.4 1.6"/></svg>
<div class="t " style="left:41px;top:738.84px;font-size:12px;color:#6d6d6d;transform:scaleX(0.9550);transform-origin:0 0;">gegevenst...</div>
<div class="t " style="left:116px;top:738.84px;font-size:12px;color:#000;transform:scaleX(0.9265);transform-origin:0 0;">Label</div>
<div class="a" style="left:17px;top:760px;width:244px;height:2px;background:#858585"></div>
<div class="t" style="left:160px;top:766px;font-size:8px;color:#aaa;letter-spacing:1px">.....</div>
<div class="t " style="left:4px;top:780.84px;font-size:12px;color:#000;font-weight:bold;transform:scaleX(0.9873);transform-origin:0 0;">AKI-gegevens</div>
<svg class="a" style="left:320px;top:777px;" width="11" height="16" viewBox="0 0 11 16"><g><rect x="0" y="1" width="2" height="2" fill="#e00"/><rect x="3" y="1" width="3" height="1.5" fill="#111"/><rect x="7" y="1" width="3" height="1.5" fill="#111"/><rect x="0" y="4" width="2" height="2" fill="#00d"/><rect x="3" y="4" width="3" height="1.5" fill="#111"/><rect x="7" y="4" width="3" height="1.5" fill="#111"/><rect x="0" y="7" width="2" height="2" fill="#0b0"/><rect x="3" y="7" width="3" height="1.5" fill="#111"/><rect x="7" y="7" width="3" height="1.5" fill="#111"/><rect x="0" y="10" width="2" height="2" fill="#b0b"/><rect x="3" y="10" width="3" height="1.5" fill="#111"/><rect x="7" y="10" width="3" height="1.5" fill="#111"/><rect x="0" y="13" width="2" height="2" fill="#0bb"/><rect x="3" y="13" width="3" height="1.5" fill="#111"/><rect x="7" y="13" width="3" height="1.5" fill="#111"/></g></svg>
<div class="a" style="left:0px;top:797px;width:320px;height:180px;background:#fff"></div>
<div class="a" style="left:327px;top:814px;width:2px;height:68px;background:#858585"></div>
<div class="t " style="left:12px;top:800.84px;font-size:12px;color:#2b45a8;transform:scaleX(0.9539);transform-origin:0 0;">Object Type Level</div>
<div class="a" style="left:109px;top:806px;width:210px;height:1px;background:#b9c9e6"></div>
<div class="a" style="left:0px;top:819px;width:319px;height:18px;background:#d9d9d9"></div>
<div class="t " style="left:22px;top:821.84px;font-size:12px;color:#1a1ae6;transform:scaleX(0.9707);transform-origin:0 0;">F211  "&lt;Gegevenstype&gt; bevat &lt;waarde AKI...</div>
<div class="t " style="left:12px;top:844.84px;font-size:12px;color:#2b45a8;transform:scaleX(0.9315);transform-origin:0 0;">Label Type Level</div>
<div class="a" style="left:102px;top:850px;width:217px;height:1px;background:#b9c9e6"></div>
<div class="t " style="left:22px;top:865.84px;font-size:12px;color:#1a1ae6;transform:scaleX(0.9775);transform-origin:0 0;">F211  "gegevenstype &lt;gegevenstype code&gt;...</div>
<div class="t " style="left:12px;top:888.84px;font-size:12px;color:#2b45a8;transform:scaleX(0.9124);transform-origin:0 0;">Rules</div>
<div class="a" style="left:44px;top:894px;width:275px;height:1px;background:#b9c9e6"></div>
<div class="t " style="left:22px;top:909.84px;font-size:12px;color:#000;transform:scaleX(0.9787);transform-origin:0 0;">Updated by LennartvanHam on 14-3-2024 ...</div>
<div class="t " style="left:22px;top:929.84px;font-size:12px;color:#000;transform:scaleX(0.9874);transform-origin:0 0;">"&lt;AKI-gegevens&gt; is unique on &lt;Gegevenst...</div>
<div class="t " style="left:12px;top:952.84px;font-size:12px;color:#2b45a8;transform:scaleX(0.9696);transform-origin:0 0;">Diagrams</div>
<div class="a" style="left:66px;top:958px;width:253px;height:1px;background:#b9c9e6"></div>
<div class="a" style="left:17px;top:985px;width:234px;height:2px;background:#858585"></div>
<div class="a" style="left:0px;top:993px;width:336px;height:1px;background:#d5d5d5"></div>
<div class="t " style="left:2px;top:997.84px;font-size:12px;color:#000;transform:scaleX(0.9488);transform-origin:0 0;">74 items (9 Objects, 40 Facts, 25 Labeltypes)</div>
<div class="a" style="left:0px;top:1012px;width:1917px;height:1px;background:#dcdcdc"></div>
<div class="a" style="left:300px;top:1016px;width:1px;height:14px;background:#d5d5d5"></div>
<div class="a" style="left:0;top:966px;width:320px;height:11px;overflow:hidden"><svg class="a" style="left:12px;top:7px" width="10" height="10" viewBox="0 0 10 10"><circle cx="3" cy="3" r="2.2" fill="#000"/><rect x="0.5" y="3" width="5" height="4" fill="#000"/></svg><div class="t" style="left:22px;top:8.84px;font-size:12px;color:#000;transform:scaleX(0.95);transform-origin:0 0">gegevenstype_classificaties.igd</div></div>
<div class="a" style="left:335px;top:993px;width:1px;height:17px;background:#d5d5d5"></div>
<svg class="a" style="left:6px;top:95px;" width="19" height="19" viewBox="0 0 19 19"><circle cx="11" cy="1.9" r="1.9" fill="#ffff00" stroke="#000" stroke-width="1.1"/><path d="M8.4 4.8h4.3v4.6h1v1.4h-5v-1.4h1v-3.2h-1.3z" fill="#ffff00" stroke="#000" stroke-width="1.1"/><ellipse cx="3.9" cy="13.6" rx="3.5" ry="3" fill="#fff" stroke="#000" stroke-width="1.3"/><ellipse cx="3.9" cy="13.6" rx="1.5" ry="1" fill="none" stroke="#000" stroke-width="1"/><path d="M7.4 13.6h1.2" stroke="#000" stroke-width="1.3"/><rect x="8.5" y="12.2" width="9" height="2.8" rx="1.4" fill="#fff" stroke="#000" stroke-width="1.2"/><path d="M12.8 12.2v2.8" stroke="#000" stroke-width="1"/></svg>
<svg class="a" style="left:33px;top:93px;" width="20" height="20" viewBox="0 0 20 20"><rect x="0.7" y="4.6" width="16.3" height="14" fill="#fff" stroke="#000" stroke-width="1.4"/><path d="M1.5 5.9h8" stroke="#00c8d8" stroke-width="1.4"/><path d="M4.6 7v11M11.6 7v11" stroke="#000" stroke-width="1"/><path d="M2.5 8v1M2.5 10v1M2.5 12v1M2.5 14v1M2.5 16v1" stroke="#c00" stroke-width="1" shape-rendering="crispEdges"/><path d="M6 8.5h4M6 10.5h4M6 12.5h4M6 14.5h4M6 16.5h4M13 8.5h3M13 10.5h3M13 12.5h3M13 14.5h3M13 16.5h3" stroke="#0000b0" stroke-width="1" shape-rendering="crispEdges"/><path d="M7 12.5L8 9L17 1.5L19.5 4L11 11.5z" fill="#fff" stroke="#000" stroke-width="1.1"/><path d="M14.5 3.5L17 1.5L19.5 4L17 6" fill="#ffff00" stroke="#000" stroke-width="0.8"/><path d="M7 12.5L8 10.5L9 11.5z" fill="#000"/></svg>
<svg class="a" style="left:62px;top:96px;" width="15" height="15" viewBox="0 0 15 15"><path d="M1.5 8.5h10" stroke="#000" stroke-width="1.6"/><rect x="2.8" y="8.5" width="7" height="5.3" fill="#000"/><path d="M5.2 9.5v3.5" stroke="#fff" stroke-width="1"/><path d="M5.5 8L12 1.8" stroke="#000" stroke-width="2.4"/><path d="M6.3 7.3L11.3 2.5" stroke="#fff" stroke-width="0.8"/><path d="M1 4.4h3M2.5 2.9v3" stroke="#ff2020" stroke-width="1.4"/><path d="M4.2 2.4h2.6M5.5 1.1v2.6" stroke="#00e0ff" stroke-width="1.4"/><path d="M11.2 12.5h2.6M12.5 11.2v2.6" stroke="#ffee00" stroke-width="1.4"/></svg>
<svg class="a" style="left:87px;top:102px;" width="8" height="5" viewBox="0 0 8 5"><path d="M0 0h8L4 4.5z" fill="#000"/></svg>
<svg class="a" style="left:100px;top:94px;" width="21" height="21" viewBox="0 0 21 21"><path d="M17.3 10.2L20.1 10.2" stroke="#000" stroke-width="1.3"/><path d="M15.3 15.0L17.3 17.0" stroke="#000" stroke-width="1.3"/><path d="M10.5 17.0L10.5 19.8" stroke="#000" stroke-width="1.3"/><path d="M5.7 15.0L3.7 17.0" stroke="#000" stroke-width="1.3"/><path d="M3.7 10.2L0.9 10.2" stroke="#000" stroke-width="1.3"/><path d="M5.7 5.4L3.7 3.4" stroke="#000" stroke-width="1.3"/><path d="M10.5 3.4L10.5 0.6" stroke="#000" stroke-width="1.3"/><path d="M15.3 5.4L17.3 3.4" stroke="#000" stroke-width="1.3"/><g transform="rotate(-28 10.5 10.5)"><rect x="4.5" y="7.5" width="12" height="6" rx="1.5" fill="#fff" stroke="#000" stroke-width="1.2"/><path d="M7.5 10.5h2M11.5 10.5h2" stroke="#000" stroke-width="0.9"/></g></svg>
<div class="a" style="left:161px;top:92px;width:2px;height:25px;background:repeating-linear-gradient(#b0b0b0 0 1.5px,transparent 1.5px 3.5px)"></div>
<div class="a" style="left:168px;top:91px;width:84px;height:25px;background:#cce4f7;border:1px solid #99ccf3;border-radius:2px"></div>
<div class="a" style="left:194px;top:92px;width:1px;height:23px;background:#99ccf3"></div>
<div class="a" style="left:210px;top:92px;width:1px;height:23px;background:#99ccf3"></div>
<div class="a" style="left:236px;top:92px;width:1px;height:23px;background:#99ccf3"></div>
<svg class="a" style="left:176px;top:97px;" width="15" height="14" viewBox="0 0 15 14"><rect x="0" y="0" width="14" height="2" fill="#000"/><rect x="0" y="3" width="14" height="2" fill="#000"/><rect x="0" y="6" width="14" height="1.6" fill="#b8b8b8"/><rect x="0" y="9" width="14" height="1.6" fill="#b8b8b8"/><rect x="0" y="12" width="14" height="2" fill="#000"/></svg>
<svg class="a" style="left:199px;top:102px;" width="8" height="5" viewBox="0 0 8 5"><path d="M0 0h8L4 4.5z" fill="#000"/></svg>
<svg class="a" style="left:218px;top:98px;" width="14" height="12" viewBox="0 0 14 12"><path d="M0.8 1.5h12.4L8 6.5V11H6V6.5z" fill="#e0e8f0" stroke="#000" stroke-width="1.1"/></svg>
<svg class="a" style="left:241px;top:102px;" width="8" height="5" viewBox="0 0 8 5"><path d="M0 0h8L4 4.5z" fill="#000"/></svg>
<div class="a" style="left:254px;top:93px;width:1px;height:22px;background:#888"></div>
<svg class="a" style="left:266px;top:95px;" width="17" height="18" viewBox="0 0 17 18"><rect x="0" y="1" width="10" height="9" fill="#000"/><rect x="1" y="2" width="3" height="3" fill="#ff0000"/><circle cx="7.5" cy="3.8" r="1.5" fill="#ffff00"/><path d="M1.5 9L4 6L6.5 9z" fill="#0000ff"/><path d="M6 9Q6 4 10.5 4.5Q14.5 5 15.5 9" fill="none" stroke="#000" stroke-width="1"/><path d="M6.5 14.5L14.5 10L16 13.5L8 17.5z" fill="#fff" stroke="#000" stroke-width="1"/></svg>
<svg class="a" style="left:291px;top:102px;" width="8" height="5" viewBox="0 0 8 5"><path d="M0 0h8L4 4.5z" fill="#000"/></svg>
<div class="a" style="left:4px;top:118px;width:2px;height:23px;background:repeating-linear-gradient(#b0b0b0 0 1.5px,transparent 1.5px 3.5px)"></div>
<svg class="a" style="left:17px;top:120px;" width="14" height="17" viewBox="0 0 14 17"><rect x="0.5" y="1.5" width="13" height="2" rx="1" fill="#999"/><rect x="5" y="0" width="4" height="2" fill="#999"/><path d="M1.5 4h11l-1 12h-9z" fill="#aaa" stroke="#8a8a8a" stroke-width="0.8"/><path d="M5 5.5v9M7 5.5v9M9 5.5v9" stroke="#d0d0d0" stroke-width="0.8"/></svg>
<svg class="a" style="left:42px;top:128px;" width="8" height="5" viewBox="0 0 8 5"><path d="M0 0h8L4 4.5z" fill="#808080"/></svg>
<svg class="a" style="left:57px;top:121px;" width="18" height="18" viewBox="0 0 18 18"><path d="M1 2.5h16M1 2.5v13h16v-13" fill="none" stroke="#000" stroke-width="1.2"/><path d="M9 0.5v17" stroke="#000" stroke-width="1"/><text x="2.3" y="13" font-family="Liberation Sans" font-weight="bold" font-size="10" fill="#000">a</text><text x="10" y="13" font-family="Liberation Sans" font-weight="bold" font-size="10" fill="#000">b</text></svg>
<svg class="a" style="left:85px;top:121px;" width="17" height="19" viewBox="0 0 17 19"><rect x="1" y="0.5" width="12" height="2" fill="#aaa"/><rect x="8" y="6.5" width="8" height="2" fill="#aaa"/><rect x="0" y="6.5" width="5" height="2" fill="#aaa"/><rect x="0" y="15.5" width="6" height="2" fill="#aaa"/><path d="M3 2.5v13" stroke="#888" stroke-width="1"/></svg>
<div class="a" style="left:144px;top:118px;width:2px;height:23px;background:repeating-linear-gradient(#b0b0b0 0 1.5px,transparent 1.5px 3.5px)"></div>
<svg class="a" style="left:156px;top:122px;" width="18" height="17" viewBox="0 0 18 17"><rect x="0.5" y="1.5" width="14" height="4.5" fill="#fff" stroke="#555" stroke-width="0.9"/><rect x="0.5" y="10.5" width="14" height="4.5" fill="#fff" stroke="#555" stroke-width="0.9"/><path d="M6 4.5L8.5 7L15.5 0.5" fill="none" stroke="#00c000" stroke-width="2"/><path d="M7 9.5L12 15.5M12 9.5L7 15.5" stroke="#ff0000" stroke-width="2"/></svg>
<svg class="a" style="left:182px;top:128px;" width="8" height="5" viewBox="0 0 8 5"><path d="M0 0h8L4 4.5z" fill="#000"/></svg>
<svg class="a" style="left:197px;top:120px;" width="21" height="21" viewBox="0 0 21 21"><circle cx="6.5" cy="6.2" r="5.2" fill="none" stroke="#222" stroke-width="2.6" stroke-dasharray="1.63 1.63"/><circle cx="6.5" cy="6.2" r="4.2" fill="#333"/><circle cx="6.5" cy="6.2" r="2.31" fill="#fff"/><circle cx="6.5" cy="6.2" r="1.26" fill="#555"/><circle cx="16.5" cy="12.5" r="4.6" fill="none" stroke="#222" stroke-width="2.6" stroke-dasharray="1.81 1.81"/><circle cx="16.5" cy="12.5" r="3.6" fill="#333"/><circle cx="16.5" cy="12.5" r="1.98" fill="#fff"/><circle cx="16.5" cy="12.5" r="1.08" fill="#555"/><circle cx="5" cy="17" r="4.0" fill="none" stroke="#222" stroke-width="2.6" stroke-dasharray="1.80 1.80"/><circle cx="5" cy="17" r="3.0" fill="#333"/><circle cx="5" cy="17" r="1.65" fill="#fff"/><circle cx="5" cy="17" r="0.90" fill="#555"/></svg>
<svg class="a" style="left:224px;top:128px;" width="8" height="5" viewBox="0 0 8 5"><path d="M0 0h8L4 4.5z" fill="#000"/></svg>
<div class="a" style="left:0;top:142px;width:336px;height:22px;background:#ebebeb"></div>
<div class="a" style="left:0px;top:142px;width:336px;height:1px;background:#e2e2e2"></div>
<svg class="a" style="left:0px;top:146px;" width="320" height="19" viewBox="0 0 320 19">
<path d="M0 17.5H8L13 1.5H71L75.5 17.5H312.5" fill="none" stroke="#8c8c8c" stroke-width="1"/>
<path d="M73 17.5L77 1.5H131L135 17.5z" fill="#ececec" stroke="#8c8c8c" stroke-width="1"/>
<path d="M73.5 17.5L75 11" stroke="#8c8c8c" stroke-width="1"/>
<path d="M135.5 17.5L139 1.5H185L189 17.5z" fill="#ececec" stroke="#8c8c8c" stroke-width="1"/>
<path d="M189.5 17.5L193 1.5H212L216.5 17.5z" fill="#ececec" stroke="#8c8c8c" stroke-width="1"/>
<path d="M8.5 17.5L13.5 1.5H70.5L75 17.5z" fill="#fbfbfb" stroke="none"/>
<path d="M8 17.5L13 1.5H71L75.5 17.5" fill="none" stroke="#8c8c8c" stroke-width="1"/>
</svg>
<div class="t " style="left:14.7px;top:149.84px;font-size:12px;color:#000;transform:scaleX(0.8876);transform-origin:0 0;">Vocabulary</div>
<div class="t " style="left:77.7px;top:149.84px;font-size:12px;color:#000;transform:scaleX(0.9051);transform-origin:0 0;">Taxonomy</div>
<div class="t " style="left:137.3px;top:149.84px;font-size:12px;color:#000;transform:scaleX(0.9080);transform-origin:0 0;">Ontology</div>
<div class="t " style="left:191.1px;top:149.84px;font-size:12px;color:#000;transform:scaleX(0.8643);transform-origin:0 0;">Log</div>
<svg class="a" style="left:320px;top:145px;" width="11" height="16" viewBox="0 0 11 16"><g><rect x="0" y="1" width="2" height="2" fill="#e00"/><rect x="3" y="1" width="3" height="1.5" fill="#111"/><rect x="7" y="1" width="3" height="1.5" fill="#111"/><rect x="0" y="4" width="2" height="2" fill="#00d"/><rect x="3" y="4" width="3" height="1.5" fill="#111"/><rect x="7" y="4" width="3" height="1.5" fill="#111"/><rect x="0" y="7" width="2" height="2" fill="#0b0"/><rect x="3" y="7" width="3" height="1.5" fill="#111"/><rect x="7" y="7" width="3" height="1.5" fill="#111"/><rect x="0" y="10" width="2" height="2" fill="#b0b"/><rect x="3" y="10" width="3" height="1.5" fill="#111"/><rect x="7" y="10" width="3" height="1.5" fill="#111"/><rect x="0" y="13" width="2" height="2" fill="#0bb"/><rect x="3" y="13" width="3" height="1.5" fill="#111"/><rect x="7" y="13" width="3" height="1.5" fill="#111"/></g></svg>
<div class="a" style="left:0px;top:185px;width:11px;height:1px;background:#505050"></div>
<div class="a" style="left:24px;top:185px;width:312px;height:1px;background:#505050"></div>
<div class="a" style="left:11px;top:169px;width:14px;height:17px;border:1px solid #505050;border-bottom:none;background:#fff"></div>
<div class="t " style="left:15px;top:169.84px;font-size:12px;color:#000;">*</div>
<div class="t" style="left:22.3px;width:20px;text-align:center;top:172.29px;font-size:11px;color:#000">A</div>
<div class="t" style="left:37.8px;width:20px;text-align:center;top:172.29px;font-size:11px;color:#000">B</div>
<div class="t" style="left:53.3px;width:20px;text-align:center;top:172.29px;font-size:11px;color:#000">C</div>
<div class="t" style="left:69.3px;width:20px;text-align:center;top:172.29px;font-size:11px;color:#000">D</div>
<div class="t" style="left:84.8px;width:20px;text-align:center;top:172.29px;font-size:11px;color:#000">E</div>
<div class="t" style="left:99.8px;width:20px;text-align:center;top:172.29px;font-size:11px;color:#000">F</div>
<div class="t" style="left:115.5px;width:20px;text-align:center;top:172.29px;font-size:11px;color:#000">G</div>
<div class="t" style="left:131.6px;width:20px;text-align:center;top:172.29px;font-size:11px;color:#000">H</div>
<div class="t" style="left:145.9px;width:20px;text-align:center;top:172.29px;font-size:11px;color:#000">I</div>
<div class="t" style="left:159.4px;width:20px;text-align:center;top:172.29px;font-size:11px;color:#000">J</div>
<div class="t" style="left:173.8px;width:20px;text-align:center;top:172.29px;font-size:11px;color:#000">K</div>
<div class="t" style="left:188.4px;width:20px;text-align:center;top:172.29px;font-size:11px;color:#000">L</div>
<div class="t" style="left:204.1px;width:20px;text-align:center;top:172.29px;font-size:11px;color:#000">M</div>
<div class="t" style="left:220.5px;width:20px;text-align:center;top:172.29px;font-size:11px;color:#000">N</div>
<div class="t" style="left:236.9px;width:20px;text-align:center;top:172.29px;font-size:11px;color:#000">O</div>
<div class="t" style="left:253.0px;width:20px;text-align:center;top:172.29px;font-size:11px;color:#000">P</div>
<div class="t" style="left:268.9px;width:20px;text-align:center;top:172.29px;font-size:11px;color:#000">Q</div>
<div class="t" style="left:285.6px;width:20px;text-align:center;top:172.29px;font-size:11px;color:#000">R</div>
<div class="a" style="left:40px;top:172px;width:1px;height:11px;background:#a8a8a8"></div>
<div class="a" style="left:55px;top:172px;width:1px;height:11px;background:#a8a8a8"></div>
<div class="a" style="left:71px;top:172px;width:1px;height:11px;background:#a8a8a8"></div>
<div class="a" style="left:87px;top:172px;width:1px;height:11px;background:#a8a8a8"></div>
<div class="a" style="left:102px;top:172px;width:1px;height:11px;background:#a8a8a8"></div>
<div class="a" style="left:117px;top:172px;width:1px;height:11px;background:#a8a8a8"></div>
<div class="a" style="left:134px;top:172px;width:1px;height:11px;background:#a8a8a8"></div>
<div class="a" style="left:149px;top:172px;width:1px;height:11px;background:#a8a8a8"></div>
<div class="a" style="left:162px;top:172px;width:1px;height:11px;background:#a8a8a8"></div>
<div class="a" style="left:176px;top:172px;width:1px;height:11px;background:#a8a8a8"></div>
<div class="a" style="left:191px;top:172px;width:1px;height:11px;background:#a8a8a8"></div>
<div class="a" style="left:206px;top:172px;width:1px;height:11px;background:#a8a8a8"></div>
<div class="a" style="left:223px;top:172px;width:1px;height:11px;background:#a8a8a8"></div>
<div class="a" style="left:238px;top:172px;width:1px;height:11px;background:#a8a8a8"></div>
<div class="a" style="left:256px;top:172px;width:1px;height:11px;background:#a8a8a8"></div>
<div class="a" style="left:270px;top:172px;width:1px;height:11px;background:#a8a8a8"></div>
<div class="a" style="left:287px;top:172px;width:1px;height:11px;background:#a8a8a8"></div>
<div class="a" style="left:304px;top:172px;width:1px;height:11px;background:#a8a8a8"></div>
<div class="a" style="left:311px;top:169px;width:12px;height:12px;border:1px solid #d8d8d8;background:#f0f0f0"></div>
<div class="a" style="left:322px;top:169px;width:12px;height:12px;border:1px solid #a0a0a0;background:#f0f0f0"></div>
<svg class="a" style="left:315px;top:172px;" width="4" height="6" viewBox="0 0 4 6"><path d="M4 0V6L0 3z" fill="#777"/></svg>
<svg class="a" style="left:327px;top:172px;" width="4" height="6" viewBox="0 0 4 6"><path d="M0 0V6L4 3z" fill="#000"/></svg>
<svg class="a" style="left:310px;top:194px;" width="17" height="17" viewBox="0 0 17 17"><circle cx="10" cy="6.8" r="4.6" fill="none" stroke="#000" stroke-width="1.6"/><path d="M6.8 10L2 14.5" stroke="#000" stroke-width="2.6" stroke-linecap="round"/></svg>
<div class="a" style="left:344px;top:71px;width:619px;height:23px;background:#ececec;border:1px solid #e3e3e3;border-bottom:none"></div>
<div class="a" style="left:582px;top:73px;width:1px;height:21px;background:#dcdcdc"></div>
<div class="a" style="left:757px;top:70px;width:278px;height:25px;background:#f7f7f7"></div>
<div class="a" style="left:1035px;top:71px;width:1px;height:23px;background:#e3e3e3"></div>
<svg class="a" style="left:350px;top:78px;" width="18" height="10" viewBox="0 0 18 10"><circle cx="4.5" cy="5" r="3.8" fill="#fff" stroke="#000" stroke-width="1.2"/><circle cx="4.5" cy="5" r="1.6" fill="none" stroke="#000" stroke-width="1"/><path d="M8.3 5h2" stroke="#000" stroke-width="1.2"/><rect x="10" y="3.3" width="7" height="3.4" rx="1.5" fill="#fff" stroke="#000" stroke-width="1.1"/></svg>
<div class="t " style="left:375.8px;top:77.84px;font-size:12px;color:#000;transform:scaleX(1.0037);transform-origin:0 0;">typeringsadministratie_kernmodel.igd</div>
<svg class="a" style="left:589px;top:78px;" width="18" height="10" viewBox="0 0 18 10"><circle cx="4.5" cy="5" r="3.8" fill="#fff" stroke="#000" stroke-width="1.2"/><circle cx="4.5" cy="5" r="1.6" fill="none" stroke="#000" stroke-width="1"/><path d="M8.3 5h2" stroke="#000" stroke-width="1.2"/><rect x="10" y="3.3" width="7" height="3.4" rx="1.5" fill="#fff" stroke="#000" stroke-width="1.1"/></svg>
<div class="t " style="left:614px;top:77.84px;font-size:12px;color:#000;transform:scaleX(1.0142);transform-origin:0 0;">typeringsadministratie.igd</div>
<svg class="a" style="left:768px;top:74px;" width="13" height="15" viewBox="0 0 13 15"><path d="M1.5 1.5h7l3 3v9h-10z" fill="#fff" stroke="#000" stroke-width="1"/><path d="M3.5 5h3M3.5 7.5h6M3.5 10h2M7 10h2.5" stroke="#000" stroke-width="1"/></svg>
<div class="t " style="left:790.3px;top:75.84px;font-size:12px;color:#000;transform:scaleX(0.9828);transform-origin:0 0;">typeringsadministratie UML Classes.plantur</div>
<svg class="a" style="left:1016px;top:75px;" width="13" height="13" viewBox="0 0 13 13"><rect x="0.5" y="0.5" width="12" height="12" rx="2.5" fill="#fff" stroke="#e0e0e0" stroke-width="0.8"/><path d="M2.8 2.8L10.2 10.2M10.2 2.8L2.8 10.2" stroke="#ff30ff" stroke-width="3.8"/><path d="M2.8 2.8L10.2 10.2M10.2 2.8L2.8 10.2" stroke="#b00010" stroke-width="2.8"/><path d="M3 3L10 10M10 3L3 10" stroke="#e00020" stroke-width="1"/></svg>
<div class="a" style="left:342px;top:94px;width:1165px;height:918px;background:#f0f0f0;border-left:1px solid #e3e3e3"></div>
<div class="a" style="left:346px;top:95px;width:1160px;height:3px;background:#f7f7f7"></div>
<div class="a" style="left:343px;top:95px;width:3px;height:915px;background:#f9f9f9"></div>
<div class="a" style="left:346px;top:98px;width:1160px;height:24px;background:#fff"></div>
<div class="a" style="left:346px;top:122px;width:1160px;height:1px;background:#e3e3e3"></div>
<svg class="a" style="left:354px;top:103px;" width="14" height="14" viewBox="0 0 14 14"><circle cx="3.5" cy="11" r="2.3" fill="none" stroke="#333" stroke-width="1.2"/><circle cx="10.5" cy="11" r="2.3" fill="none" stroke="#333" stroke-width="1.2"/><path d="M5 9.3L11.5 1M9 9.3L2.5 1" stroke="#333" stroke-width="1.2"/></svg>
<svg class="a" style="left:381px;top:104px;" width="13" height="14" viewBox="0 0 13 14"><path d="M1.5 1.5h4l2 2v6h-6z" fill="#fff" stroke="#555" stroke-width="1"/><path d="M5.5 4.5h4l2 2v6h-6z" fill="#eee" stroke="#555" stroke-width="1"/><path d="M7 8h3M7 10h3" stroke="#999" stroke-width="0.8"/></svg>
<svg class="a" style="left:407px;top:103px;" width="15" height="15" viewBox="0 0 15 15"><rect x="1.5" y="2.5" width="8" height="10" rx="1" fill="#eee" stroke="#555" stroke-width="1"/><rect x="3.5" y="1" width="4" height="2.5" fill="#555"/><path d="M7.5 6.5h4l2 2v6h-6z" fill="#eee" stroke="#555" stroke-width="1"/></svg>
<div class="a" style="left:431px;top:100px;width:1px;height:22px;background:#888"></div>
<svg class="a" style="left:444px;top:104px;" width="12" height="10" viewBox="0 0 12 10"><path d="M3 6 Q4 2.5 7.5 3 Q10.5 4 9.5 7" fill="none" stroke="#333" stroke-width="1.1"/><path d="M1.2 3.5 L2.8 7.3 L5.8 5.2z" fill="#333"/></svg>
<div class="a" style="left:346px;top:126px;width:1140px;height:821px;background:#fff"></div>
<div class="a" style="left:346px;top:124px;width:46px;height:823px;background:#f0f0f0"></div>
<div class="a" style="left:392px;top:126px;width:4px;height:821px;background:#ffff00"></div>
<div class="a" style="left:1040px;top:126px;width:1px;height:821px;background:#c8c8c8"></div>
<div class="a" style="left:396px;top:126px;width:1px;height:821px;background:#a8a8a8"></div>
<div class="a" style="left:1486px;top:124px;width:20px;height:823px;background:#f0f0f0"></div>
<div class="a" style="left:1492px;top:144px;width:2px;height:221px;background:#858585"></div>
<div class="t" style="right:1527px;top:130.57px;font-family:'Liberation Mono';font-size:11px;color:#000">1</div>
<div class="t" style="left:400px;top:128.78px;font-family:'Liberation Mono';font-size:13.333px;color:#000">!pragma layout smetana</div>
<div class="t" style="right:1527px;top:147.57px;font-family:'Liberation Mono';font-size:11px;color:#000">2</div>
<div class="t" style="left:400px;top:145.78px;font-family:'Liberation Mono';font-size:13.333px;color:#000">@startuml</div>
<div class="t" style="right:1527px;top:164.57px;font-family:'Liberation Mono';font-size:11px;color:#000">3</div>
<div class="t" style="left:400px;top:162.78px;font-family:'Liberation Mono';font-size:13.333px;color:#000">skinparam dpi <span style="color:#098000">96</span></div>
<div class="t" style="right:1527px;top:181.57px;font-family:'Liberation Mono';font-size:11px;color:#000">4</div>
<div class="t" style="left:400px;top:179.78px;font-family:'Liberation Mono';font-size:13.333px;color:#000">hide circle</div>
<div class="t" style="right:1527px;top:198.57px;font-family:'Liberation Mono';font-size:11px;color:#000">5</div>
<div class="t" style="left:400px;top:196.78px;font-family:'Liberation Mono';font-size:13.333px;color:#000">hide stereotype</div>
<div class="t" style="right:1527px;top:215.57px;font-family:'Liberation Mono';font-size:11px;color:#000">6</div>
<div class="t" style="left:400px;top:213.78px;font-family:'Liberation Mono';font-size:13.333px;color:#000">hide empty members</div>
<div class="t" style="right:1527px;top:232.57px;font-family:'Liberation Mono';font-size:11px;color:#000">7</div>
<div class="t" style="left:400px;top:230.78px;font-family:'Liberation Mono';font-size:13.333px;color:#000">skinparam linetype ortho</div>
<div class="t" style="right:1527px;top:249.57px;font-family:'Liberation Mono';font-size:11px;color:#000">8</div>
<div class="t" style="left:400px;top:247.78px;font-family:'Liberation Mono';font-size:13.333px;color:#000">skinparam wrapWidth <span style="color:#098000">300</span></div>
<div class="t" style="right:1527px;top:266.57px;font-family:'Liberation Mono';font-size:11px;color:#000">9</div>
<div class="t" style="left:400px;top:264.78px;font-family:'Liberation Mono';font-size:13.333px;color:#000">skinparam backgroundColor transparent</div>
<div class="t" style="right:1527px;top:283.57px;font-family:'Liberation Mono';font-size:11px;color:#000">10</div>
<div class="t" style="left:400px;top:281.78px;font-family:'Liberation Mono';font-size:13.333px;color:#000">skinparam shadowing False</div>
<div class="t" style="right:1527px;top:300.57px;font-family:'Liberation Mono';font-size:11px;color:#000">11</div>
<div class="t" style="left:400px;top:298.78px;font-family:'Liberation Mono';font-size:13.333px;color:#000">skinparam arrowColor <span style="color:#098000">#000000</span></div>
<div class="t" style="right:1527px;top:317.57px;font-family:'Liberation Mono';font-size:11px;color:#000">12</div>
<div class="t" style="left:400px;top:315.78px;font-family:'Liberation Mono';font-size:13.333px;color:#000">skinparam default {</div>
<div class="t" style="right:1527px;top:334.57px;font-family:'Liberation Mono';font-size:11px;color:#000">13</div>
<div class="t" style="left:400px;top:332.78px;font-family:'Liberation Mono';font-size:13.333px;color:#000">  FontName Times New Roman</div>
<div class="t" style="right:1527px;top:351.57px;font-family:'Liberation Mono';font-size:11px;color:#000">14</div>
<div class="t" style="left:400px;top:349.78px;font-family:'Liberation Mono';font-size:13.333px;color:#000">  FontSize <span style="color:#098000">11</span></div>
<div class="t" style="right:1527px;top:368.57px;font-family:'Liberation Mono';font-size:11px;color:#000">15</div>
<div class="t" style="left:400px;top:366.78px;font-family:'Liberation Mono';font-size:13.333px;color:#000">  FontColor <span style="color:#098000">#080000</span></div>
<div class="t" style="right:1527px;top:385.57px;font-family:'Liberation Mono';font-size:11px;color:#000">16</div>
<div class="t" style="left:400px;top:383.78px;font-family:'Liberation Mono';font-size:13.333px;color:#000">  BorderColor <span style="color:#098000">#000000</span></div>
<div class="t" style="right:1527px;top:402.57px;font-family:'Liberation Mono';font-size:11px;color:#000">17</div>
<div class="t" style="left:400px;top:400.78px;font-family:'Liberation Mono';font-size:13.333px;color:#000">  BackgroundColor <span style="color:#098000">#</span>FFFFFF</div>
<div class="t" style="right:1527px;top:419.57px;font-family:'Liberation Mono';font-size:11px;color:#000">18</div>
<div class="t" style="left:400px;top:417.78px;font-family:'Liberation Mono';font-size:13.333px;color:#000">}</div>
<div class="t" style="right:1527px;top:436.57px;font-family:'Liberation Mono';font-size:11px;color:#000">19</div>
<div class="t" style="left:400px;top:434.78px;font-family:'Liberation Mono';font-size:13.333px;color:#000">skinparam Note {</div>
<div class="t" style="right:1527px;top:453.57px;font-family:'Liberation Mono';font-size:11px;color:#000">20</div>
<div class="t" style="left:400px;top:451.78px;font-family:'Liberation Mono';font-size:13.333px;color:#000">  FontName Arial</div>
<div class="t" style="right:1527px;top:470.57px;font-family:'Liberation Mono';font-size:11px;color:#000">21</div>
<div class="t" style="left:400px;top:468.78px;font-family:'Liberation Mono';font-size:13.333px;color:#000">  FontSize <span style="color:#098000">6</span></div>
<div class="t" style="right:1527px;top:487.57px;font-family:'Liberation Mono';font-size:11px;color:#000">22</div>
<div class="t" style="left:400px;top:485.78px;font-family:'Liberation Mono';font-size:13.333px;color:#000">  FontColor <span style="color:#098000">#080000</span></div>
<div class="t" style="right:1527px;top:504.57px;font-family:'Liberation Mono';font-size:11px;color:#000">23</div>
<div class="t" style="left:400px;top:502.78px;font-family:'Liberation Mono';font-size:13.333px;color:#000">}</div>
<div class="t" style="right:1527px;top:521.57px;font-family:'Liberation Mono';font-size:11px;color:#000">24</div>
<div class="t" style="left:400px;top:519.78px;font-family:'Liberation Mono';font-size:13.333px;color:#000">skinparam Class {</div>
<div class="t" style="right:1527px;top:538.57px;font-family:'Liberation Mono';font-size:11px;color:#000">25</div>
<div class="t" style="left:400px;top:536.78px;font-family:'Liberation Mono';font-size:13.333px;color:#000">  FontName Times New Roman</div>
<div class="t" style="right:1527px;top:555.57px;font-family:'Liberation Mono';font-size:11px;color:#000">26</div>
<div class="t" style="left:400px;top:553.78px;font-family:'Liberation Mono';font-size:13.333px;color:#000">  FontSize <span style="color:#098000">11</span></div>
<div class="t" style="right:1527px;top:572.57px;font-family:'Liberation Mono';font-size:11px;color:#000">27</div>
<div class="t" style="left:400px;top:570.78px;font-family:'Liberation Mono';font-size:13.333px;color:#000">  FontColor <span style="color:#098000">#080000</span></div>
<div class="t" style="right:1527px;top:589.57px;font-family:'Liberation Mono';font-size:11px;color:#000">28</div>
<div class="t" style="left:400px;top:587.78px;font-family:'Liberation Mono';font-size:13.333px;color:#000">  BorderColor <span style="color:#098000">#000000</span></div>
<div class="t" style="right:1527px;top:606.57px;font-family:'Liberation Mono';font-size:11px;color:#000">29</div>
<div class="t" style="left:400px;top:604.78px;font-family:'Liberation Mono';font-size:13.333px;color:#000">  BackgroundColor <span style="color:#098000">#</span>FFFFFF</div>
<div class="t" style="right:1527px;top:623.57px;font-family:'Liberation Mono';font-size:11px;color:#000">30</div>
<div class="t" style="left:400px;top:621.78px;font-family:'Liberation Mono';font-size:13.333px;color:#000">  }</div>
<div class="t" style="right:1527px;top:640.57px;font-family:'Liberation Mono';font-size:11px;color:#000">31</div>
<div class="t" style="left:400px;top:638.78px;font-family:'Liberation Mono';font-size:13.333px;color:#000"></div>
<div class="t" style="right:1527px;top:657.57px;font-family:'Liberation Mono';font-size:11px;color:#000">32</div>
<div class="t" style="left:400px;top:655.78px;font-family:'Liberation Mono';font-size:13.333px;color:#000">legend</div>
<div class="t" style="right:1527px;top:674.57px;font-family:'Liberation Mono';font-size:11px;color:#000">33</div>
<div class="t" style="left:400px;top:672.78px;font-family:'Liberation Mono';font-size:13.333px;color:#000">**Diagram: <span style="color:#8b0000">typeringsadministratie</span>.igd **</div>
<div class="t" style="right:1527px;top:691.57px;font-family:'Liberation Mono';font-size:11px;color:#000">34</div>
<div class="t" style="left:400px;top:689.78px;font-family:'Liberation Mono';font-size:13.333px;color:#000">Creation date: <span style="color:#098000">4-4-2024 07</span>:<span style="color:#098000">50</span>:<span style="color:#098000">15</span></div>
<div class="t" style="right:1527px;top:708.57px;font-family:'Liberation Mono';font-size:11px;color:#000">35</div>
<div class="t" style="left:400px;top:706.78px;font-family:'Liberation Mono';font-size:13.333px;color:#000">Author: Lennart van Ham</div>
<div class="t" style="right:1527px;top:725.57px;font-family:'Liberation Mono';font-size:11px;color:#000">36</div>
<div class="t" style="left:400px;top:723.78px;font-family:'Liberation Mono';font-size:13.333px;color:#000">Repository: <span style="color:#8b0000">typeringsadministratie</span></div>
<div class="t" style="right:1527px;top:742.57px;font-family:'Liberation Mono';font-size:11px;color:#000">37</div>
<div class="t" style="left:400px;top:740.78px;font-family:'Liberation Mono';font-size:13.333px;color:#000">end legend</div>
<div class="t" style="right:1527px;top:759.57px;font-family:'Liberation Mono';font-size:11px;color:#000">38</div>
<div class="t" style="left:400px;top:757.78px;font-family:'Liberation Mono';font-size:13.333px;color:#000">enum "waarde <span style="color:#8b0000">BBN</span>" as waarde_BBN {</div>
<div class="t" style="right:1527px;top:776.57px;font-family:'Liberation Mono';font-size:11px;color:#000">39</div>
<div class="t" style="left:400px;top:774.78px;font-family:'Liberation Mono';font-size:13.333px;color:#000">  BBN1</div>
<div class="t" style="right:1527px;top:793.57px;font-family:'Liberation Mono';font-size:11px;color:#000">40</div>
<div class="t" style="left:400px;top:791.78px;font-family:'Liberation Mono';font-size:13.333px;color:#000">  BBN2</div>
<div class="t" style="right:1527px;top:810.57px;font-family:'Liberation Mono';font-size:11px;color:#000">41</div>
<div class="t" style="left:400px;top:808.78px;font-family:'Liberation Mono';font-size:13.333px;color:#000">  BBN3</div>
<div class="t" style="right:1527px;top:827.57px;font-family:'Liberation Mono';font-size:11px;color:#000">42</div>
<div class="t" style="left:400px;top:825.78px;font-family:'Liberation Mono';font-size:13.333px;color:#000">}</div>
<div class="t" style="right:1527px;top:844.57px;font-family:'Liberation Mono';font-size:11px;color:#000">43</div>
<div class="t" style="left:400px;top:842.78px;font-family:'Liberation Mono';font-size:13.333px;color:#000">hide waarde_BBN methods</div>
<div class="t" style="right:1527px;top:861.57px;font-family:'Liberation Mono';font-size:11px;color:#000">44</div>
<div class="t" style="left:400px;top:859.78px;font-family:'Liberation Mono';font-size:13.333px;color:#000"></div>
<div class="t" style="right:1527px;top:878.57px;font-family:'Liberation Mono';font-size:11px;color:#000">45</div>
<div class="t" style="left:400px;top:876.78px;font-family:'Liberation Mono';font-size:13.333px;color:#000">enum "waarde datatype <span style="color:#8b0000">gegevenstype</span>" as waarde_datatype_gegevenstype {</div>
<div class="t" style="right:1527px;top:895.57px;font-family:'Liberation Mono';font-size:11px;color:#000">46</div>
<div class="t" style="left:400px;top:893.78px;font-family:'Liberation Mono';font-size:13.333px;color:#000">  Boolean</div>
<div class="t" style="right:1527px;top:912.57px;font-family:'Liberation Mono';font-size:11px;color:#000">47</div>
<div class="t" style="left:400px;top:910.78px;font-family:'Liberation Mono';font-size:13.333px;color:#000">  Byte</div>
<div class="t" style="right:1527px;top:929.57px;font-family:'Liberation Mono';font-size:11px;color:#000">48</div>
<div class="t" style="left:400px;top:927.78px;font-family:'Liberation Mono';font-size:13.333px;color:#000">  Categorical</div>
<div class="a" style="left:367px;top:955px;width:145px;height:2px;background:#858585"></div>
<div class="a" style="left:346px;top:969px;width:1160px;height:20px;background:#ebebeb"></div>
<svg class="a" style="left:346px;top:968px;" width="1160" height="19" viewBox="0 0 1160 19"><path d="M44.8 0.5L49.5 16.5H91.5L96.2 0.5z" fill="#fafafa"/><path d="M0 0.5H6.8L12 16.5H44L48.8 0.5H1160" fill="none" stroke="#8c8c8c" stroke-width="1"/><path d="M44.5 16.5L48.8 0.5M49 16.5H91.5L96.2 0.5" fill="none" stroke="#8c8c8c" stroke-width="1"/></svg>
<div class="t " style="left:359px;top:970.84px;font-size:12px;color:#000;transform:scaleX(0.8803);transform-origin:0 0;">Script</div>
<div class="t " style="left:396.5px;top:970.84px;font-size:12px;color:#000;transform:scaleX(0.8902);transform-origin:0 0;">Preview</div>
<div class="a" style="left:346px;top:989px;width:1160px;height:1px;background:#dcdcdc"></div>
<div class="a" style="left:495px;top:991px;width:1px;height:17px;background:#d5d5d5"></div>
<div class="a" style="left:499px;top:1016px;width:1px;height:14px;background:#d5d5d5"></div>
<div class="a" style="left:1507px;top:69px;width:8px;height:943px;background:#f0f0f0"></div>
<div class="a" style="left:1506px;top:94px;width:1px;height:916px;background:#dedede"></div>
<div class="t " style="left:1519px;top:73.84px;font-size:12px;color:#000;font-weight:bold;transform:scaleX(1.0086);transform-origin:0 0;">typeringsadministratie.prj</div>
<div class="a" style="left:1515px;top:91px;width:402px;height:25px;background:#fff"></div>
<div class="a" style="left:1515px;top:116px;width:402px;height:1px;background:#e3e3e3"></div>
<div class="a" style="left:1515px;top:117px;width:402px;height:717px;background:#fff"></div>
<svg class="a" style="left:1520px;top:120px;" width="14" height="11" viewBox="0 0 14 11"><path d="M0.5 1.5h4.5l1.2 1.2h6.3v7.3h-12z" fill="url(#yh)" stroke="#000" stroke-width="1"/></svg>
<div class="t " style="left:1539.5px;top:120.24px;font-size:12px;color:#000;font-weight:bold;transform:scaleX(0.9638);transform-origin:0 0;">typeringsadministratie.prj</div>
<div class="a" style="left:1526px;top:135px;width:1px;height:1px;background:#888"></div>
<svg class="a" style="left:1521px;top:141px;" width="9" height="6" viewBox="0 0 9 6"><path d="M0.5 0.5L4.5 4.5L8.5 0.5" fill="none" stroke="#333" stroke-width="1.2"/></svg>
<div class="a" style="left:1534px;top:145px;width:4px;height:1px;border-top:1px dotted #888"></div>
<svg class="a" style="left:1539px;top:139px;" width="11" height="11" viewBox="0 0 11 11"><rect x="1" y="0.8" width="9" height="9.4" rx="1.5" fill="#00dd00" stroke="#000" stroke-width="1.3"/><path d="M1 2.6h9" stroke="#005500" stroke-width="0.9"/></svg>
<div class="t " style="left:1558.9px;top:138.24px;font-size:12px;color:#000;font-weight:bold;transform:scaleX(0.9582);transform-origin:0 0;">typeringsadministratie.ig</div>
<div class="a" style="left:1545px;top:153px;width:1px;height:137px;border-left:1px dotted #888"></div>
<div class="a" style="left:1546px;top:162px;width:10px;height:1px;border-top:1px dotted #888"></div>
<svg class="a" style="left:1556px;top:157px;" width="15" height="13" viewBox="0 0 15 13"><path d="M7.5 1c3.6 0 6.8 1.9 6.8 4.5S11.1 10 7.5 10c-.7 0-1.4-.1-2-.2L3 12.5l.4-3.2C1.8 8.5.7 7.1.7 5.5.7 2.9 3.9 1 7.5 1z" fill="#fff" stroke="#000" stroke-width="1.1"/></svg>
<div class="t " style="left:1577.2px;top:156.34px;font-size:12px;color:#000;transform:scaleX(1.0008);transform-origin:0 0;">typeringsadministratie.exp</div>
<div class="a" style="left:1546px;top:180px;width:10px;height:1px;border-top:1px dotted #888"></div>
<svg class="a" style="left:1556px;top:176.5px;" width="16" height="8" viewBox="0 0 16 8"><circle cx="4" cy="3.7" r="3.2" fill="#fff" stroke="#000" stroke-width="1.2"/><circle cx="4" cy="3.7" r="1.2" fill="none" stroke="#000" stroke-width="0.9"/><path d="M7.2 3.7h1.8" stroke="#000" stroke-width="1.3"/><rect x="9" y="2" width="6.5" height="3.4" rx="1.2" fill="#fff" stroke="#000" stroke-width="1.3"/><path d="M11 3.7h2.5" stroke="#000" stroke-width="0.8"/></svg>
<div class="t " style="left:1577.2px;top:174.34px;font-size:12px;color:#000;font-weight:bold;transform:scaleX(0.9663);transform-origin:0 0;">typeringsadministratie_kernmodel.igd</div>
<div class="a" style="left:1546px;top:198px;width:10px;height:1px;border-top:1px dotted #888"></div>
<div class="a" style="left:1570px;top:189px;width:172px;height:17px;background:#d9d9d9;border-radius:2px"></div>
<svg class="a" style="left:1558px;top:192px;" width="12" height="12" viewBox="0 0 12 12"><rect x="0.5" y="0.5" width="11" height="11" fill="#0000a0"/><rect x="2.5" y="1" width="7" height="4.5" fill="#fff"/><rect x="3" y="7.5" width="6" height="4" fill="#c0c0c0"/><rect x="6.5" y="8" width="1.5" height="3" fill="#0000a0"/></svg>
<svg class="a" style="left:1572px;top:194px;" width="16" height="8" viewBox="0 0 16 8"><circle cx="4" cy="3.7" r="3.2" fill="#fff" stroke="#000" stroke-width="1.2"/><circle cx="4" cy="3.7" r="1.2" fill="none" stroke="#000" stroke-width="0.9"/><path d="M7.2 3.7h1.8" stroke="#000" stroke-width="1.3"/><rect x="9" y="2" width="6.5" height="3.4" rx="1.2" fill="#fff" stroke="#000" stroke-width="1.3"/><path d="M11 3.7h2.5" stroke="#000" stroke-width="0.8"/></svg>
<div class="t " style="left:1594px;top:192.34px;font-size:12px;color:#fff;transform:scaleX(1.0561);transform-origin:0 0;">typeringsadministratie.igd</div>
<div class="a" style="left:1546px;top:216px;width:10px;height:1px;border-top:1px dotted #888"></div>
<svg class="a" style="left:1556px;top:211px;" width="15" height="13" viewBox="0 0 15 13"><path d="M7.5 1c3.6 0 6.8 1.9 6.8 4.5S11.1 10 7.5 10c-.7 0-1.4-.1-2-.2L3 12.5l.4-3.2C1.8 8.5.7 7.1.7 5.5.7 2.9 3.9 1 7.5 1z" fill="#fff" stroke="#000" stroke-width="1.1"/></svg>
<div class="t " style="left:1577.2px;top:210.34px;font-size:12px;color:#000;transform:scaleX(0.9973);transform-origin:0 0;">typeringsadministratie_nfi.exp</div>
<div class="a" style="left:1546px;top:234px;width:10px;height:1px;border-top:1px dotted #888"></div>
<svg class="a" style="left:1556px;top:230.5px;" width="16" height="8" viewBox="0 0 16 8"><circle cx="4" cy="3.7" r="3.2" fill="#fff" stroke="#000" stroke-width="1.2"/><circle cx="4" cy="3.7" r="1.2" fill="none" stroke="#000" stroke-width="0.9"/><path d="M7.2 3.7h1.8" stroke="#000" stroke-width="1.3"/><rect x="9" y="2" width="6.5" height="3.4" rx="1.2" fill="#fff" stroke="#000" stroke-width="1.3"/><path d="M11 3.7h2.5" stroke="#000" stroke-width="0.8"/></svg>
<div class="t " style="left:1577.2px;top:228.34px;font-size:12px;color:#000;transform:scaleX(0.9638);transform-origin:0 0;">gegevenstype_classificaties.igd</div>
<div class="a" style="left:1546px;top:252px;width:10px;height:1px;border-top:1px dotted #888"></div>
<svg class="a" style="left:1556px;top:248.5px;" width="16" height="8" viewBox="0 0 16 8"><circle cx="4" cy="3.7" r="3.2" fill="#fff" stroke="#000" stroke-width="1.2"/><circle cx="4" cy="3.7" r="1.2" fill="none" stroke="#000" stroke-width="0.9"/><path d="M7.2 3.7h1.8" stroke="#000" stroke-width="1.3"/><rect x="9" y="2" width="6.5" height="3.4" rx="1.2" fill="#fff" stroke="#000" stroke-width="1.3"/><path d="M11 3.7h2.5" stroke="#000" stroke-width="0.8"/></svg>
<div class="t " style="left:1577.2px;top:246.34px;font-size:12px;color:#000;transform:scaleX(0.9911);transform-origin:0 0;">kernmodel_wensenlijst.igd</div>
<div class="a" style="left:1546px;top:270px;width:10px;height:1px;border-top:1px dotted #888"></div>
<div class="t " style="left:1577.2px;top:264.34px;font-size:12px;color:#000;transform:scaleX(0.9844);transform-origin:0 0;">typeringsadministratie_glossary.xls</div>
<div class="a" style="left:1546px;top:288px;width:10px;height:1px;border-top:1px dotted #888"></div>
<div class="t " style="left:1577.2px;top:282.34px;font-size:12px;color:#000;font-weight:bold;transform:scaleX(0.9498);transform-origin:0 0;">typeringsadministratie uml classes.plantuml</div>
<div class="t" style="left:1712px;top:828px;font-size:8px;color:#aaa;letter-spacing:1px">.....</div>
<div class="a" style="left:1515px;top:834px;width:402px;height:6px;background:#f0f0f0"></div>
<div class="a" style="left:1517px;top:841px;width:16px;height:16px;background:#fafafa"></div>
<svg class="a" style="left:1517px;top:845px;" width="16" height="9" viewBox="0 0 16 9"><circle cx="4" cy="3.7" r="3.2" fill="#fff" stroke="#000" stroke-width="1.2"/><circle cx="4" cy="3.7" r="1.2" fill="none" stroke="#000" stroke-width="0.9"/><path d="M7.2 3.7h1.8" stroke="#000" stroke-width="1.3"/><rect x="9" y="2" width="6.5" height="3.4" rx="1.2" fill="#fff" stroke="#000" stroke-width="1.3"/><path d="M11 3.7h2.5" stroke="#000" stroke-width="0.8"/></svg>
<div class="t " style="left:1534.8px;top:842.84px;font-size:12px;color:#000;font-weight:bold;transform:scaleX(0.9942);transform-origin:0 0;">Properties</div>
<div class="a" style="left:1515px;top:858px;width:402px;height:153px;background:#fff"></div>
<div class="t " style="left:1515px;top:860.84px;font-size:12px;color:#000;transform:scaleX(0.9971);transform-origin:0 0;">File: typeringsadministratie.igd</div>
<div class="t " style="left:1515px;top:875.84px;font-size:12px;color:#000;transform:scaleX(1.0090);transform-origin:0 0;">Path: C:\Users\LennartvanHam\GitProjects\metamodel\modellen</div>
<div class="t " style="left:1515px;top:890.84px;font-size:12px;color:#000;transform:scaleX(1.0136);transform-origin:0 0;">\kernmodel_gegevensboekhouding\</div>
<div class="t " style="left:1515px;top:905.84px;font-size:12px;color:#000;transform:scaleX(0.9335);transform-origin:0 0;">Date: 26-3-2024 11:19:16</div>
<div class="a" style="left:1515px;top:991px;width:402px;height:1px;background:#a0a0a0"></div>
<div class="a" style="left:1515px;top:992px;width:402px;height:20px;background:#ececec"></div>
<svg class="a" style="left:1515px;top:991px;" width="120" height="19" viewBox="0 0 120 19"><path d="M51 0.5L55 16.5H95L99 0.5z" fill="#fafafa"/><path d="M6.8 0.5L12 16.5H50L54 0.5" fill="#fafafa" stroke="#8c8c8c" stroke-width="1"/><path d="M51 16.5L55 0.5M55 16.5H95L99 0.5" fill="none" stroke="#8c8c8c" stroke-width="1"/></svg>
<div class="t " style="left:1528.3px;top:993.84px;font-size:12px;color:#000;transform:scaleX(0.9185);transform-origin:0 0;">Project</div>
<div class="t " style="left:1572.2px;top:993.84px;font-size:12px;color:#000;transform:scaleX(0.9078);transform-origin:0 0;">History</div>
<svg class="a" style="left:1523px;top:95px;" width="17" height="16" viewBox="0 0 17 16"><path d="M1.5 13.5V5.5h4l1 1h5v2" fill="url(#yh)" stroke="#000" stroke-width="1.1"/><path d="M1.5 13.5L4.5 8.5h11l-3 5z" fill="url(#yh)" stroke="#000" stroke-width="1.2"/><path d="M9 4.5h6M12 1.5v6" stroke="#000" stroke-width="3.6"/><path d="M9.5 4.5h5M12 2v5" stroke="#00d000" stroke-width="2"/></svg>
<svg class="a" style="left:1548px;top:103px;" width="8" height="5" viewBox="0 0 8 5"><path d="M0 0h8L4 4.5z" fill="#000"/></svg>
<svg class="a" style="left:1565px;top:96px;" width="17" height="16" viewBox="0 0 17 16"><path d="M1.5 13.5V5.5h4l1 1h5v2" fill="url(#yh)" stroke="#000" stroke-width="1.1"/><path d="M1.5 13.5L4.5 8.5h11l-3 5z" fill="url(#yh)" stroke="#000" stroke-width="1.2"/><rect x="9" y="2" width="7.5" height="3.2" rx="1" fill="#ff0000" stroke="#000" stroke-width="0.8"/></svg>
<svg class="a" style="left:1590px;top:95px;" width="18" height="19" viewBox="0 0 18 19"><circle cx="4.5" cy="4.5" r="3.6" fill="#1060c0" stroke="#003080" stroke-width="1.6" stroke-dasharray="1.5 1"/><path d="M9.5 7v4M14 7v4" stroke="#000" stroke-width="1.2"/><path d="M8 10.5h7.5v2.5q0 3-3.75 3t-3.75-3z" fill="#fff" stroke="#000" stroke-width="1.2"/><path d="M11.75 16v2.5" stroke="#000" stroke-width="1.4"/></svg>
<svg class="a" style="left:1617px;top:103px;" width="8" height="5" viewBox="0 0 8 5"><path d="M0 0h8L4 4.5z" fill="#000"/></svg>
<div class="a" style="left:1630px;top:93px;width:1px;height:23px;background:#888"></div>
<svg class="a" style="left:1642px;top:96px;" width="17" height="17" viewBox="0 0 17 17"><rect x="5.5" y="1.5" width="10" height="10" fill="#fff" stroke="#000" stroke-width="1"/><rect x="3.5" y="3" width="10" height="9.5" fill="#fff" stroke="#000" stroke-width="1"/><path d="M1 5h4l1 1h5v6H1z" fill="#cccc00" stroke="#000" stroke-width="0.9"/><path d="M8.5 12.5v2.5M5 15.5h7" stroke="#000" stroke-width="1.2"/></svg>
<svg class="a" style="left:1667px;top:103px;" width="8" height="5" viewBox="0 0 8 5"><path d="M0 0h8L4 4.5z" fill="#000"/></svg>
<div class="a" style="left:1680px;top:93px;width:1px;height:23px;background:#888"></div>
<svg class="a" style="left:1692px;top:98px;" width="12" height="10" viewBox="0 0 12 10"><path d="M6 0.5L11.5 6H8.5V9.5H3.5V6H0.5z" fill="#00c0c0" stroke="#006060" stroke-width="0.8"/></svg>
<svg class="a" style="left:1719px;top:98px;" width="12" height="10" viewBox="0 0 12 10"><path d="M6 9.5L11.5 4H8.5V0.5H3.5V4H0.5z" fill="#00c0c0" stroke="#006060" stroke-width="0.8"/></svg>
<div class="a" style="left:1742px;top:93px;width:1px;height:23px;background:#888"></div>
<svg class="a" style="left:1751px;top:94px;" width="20" height="20" viewBox="0 0 20 20"><circle cx="13" cy="3" r="2" fill="#ffff00" stroke="#000" stroke-width="1"/><path d="M11 6.5h3.5v6h1.5v1.5h-5v-1.5h1v-4.5h-1z" fill="#ffff00" stroke="#000" stroke-width="1"/><ellipse cx="4.5" cy="15" rx="3.8" ry="3" fill="#fff" stroke="#000" stroke-width="1.2"/><ellipse cx="4.5" cy="15" rx="1.6" ry="1.1" fill="none" stroke="#000" stroke-width="0.9"/><rect x="9" y="13.5" width="9" height="3" rx="1.4" fill="#fff" stroke="#000" stroke-width="1.1"/></svg>
<svg class="a" style="left:1779px;top:95px;" width="17" height="18" viewBox="0 0 17 18"><path d="M5 8V5Q5 1.5 9 1.5Q13 1.5 13 5V6" fill="none" stroke="#444" stroke-width="1.8"/><rect x="2.5" y="8" width="13" height="9" rx="1.5" fill="#a0a0a0" stroke="#333" stroke-width="1"/><path d="M7 11.5h4M9 11.5v3.5" stroke="#222" stroke-width="1.2"/><path d="M0.5 1.5L3.5 4.5M3 0.5v3M0 3.5h3" stroke="#ffee00" stroke-width="1.2"/></svg>
<div class="a" style="left:1804px;top:93px;width:1px;height:23px;background:#888"></div>
<svg class="a" style="left:1813px;top:96px;" width="18" height="16" viewBox="0 0 18 16"><path d="M4 4h5l1 1h6v7H4z" fill="#cccc00" stroke="#000" stroke-width="1"/><path d="M1 10.5h4l3-1.5h5l-1.5 3h-7l-1 2H1z" fill="#fff" stroke="#000" stroke-width="1"/></svg>
<svg class="a" style="left:1630px;top:920px;" width="170" height="72" viewBox="0 0 170 72"><path d="M14 12L119 20" stroke="#dcdcdc" stroke-width="0.5"/><path d="M119 21L140 57" stroke="#dcdcdc" stroke-width="0.5"/><path d="M15 13L90 66" stroke="#dcdcdc" stroke-width="0.5"/><path d="M59 33L140 57" stroke="#dcdcdc" stroke-width="0.5"/><path d="M16 12L59 33" stroke="#dcdcdc" stroke-width="0.5"/><path d="M59 33L62 22" stroke="#dcdcdc" stroke-width="0.5"/><path d="M59 33L74 24" stroke="#dcdcdc" stroke-width="0.5"/><path d="M59 33L80 30" stroke="#dcdcdc" stroke-width="0.5"/><path d="M59 33L46 29" stroke="#dcdcdc" stroke-width="0.5"/><path d="M59 33L106 36" stroke="#dcdcdc" stroke-width="0.5"/><path d="M70 40L124 50" stroke="#dcdcdc" stroke-width="0.5"/><path d="M55 50L124 52" stroke="#dcdcdc" stroke-width="0.5"/><path d="M55 54L117 55" stroke="#dcdcdc" stroke-width="0.5"/><path d="M56 54L90 66" stroke="#dcdcdc" stroke-width="0.5"/><path d="M107 36L140 57" stroke="#dcdcdc" stroke-width="0.5"/><path d="M108 45L140 57" stroke="#dcdcdc" stroke-width="0.5"/><path d="M124 50L140 57" stroke="#dcdcdc" stroke-width="0.5"/><path d="M140 57L152 46" stroke="#dcdcdc" stroke-width="0.5"/><path d="M140 57L161 53" stroke="#dcdcdc" stroke-width="0.5"/><path d="M99 56L140 57" stroke="#dcdcdc" stroke-width="0.5"/><path d="M91 58L108 57" stroke="#dcdcdc" stroke-width="0.5"/><path d="M72 37L98 45" stroke="#dcdcdc" stroke-width="0.5"/><path d="M62 22L73 20" stroke="#dcdcdc" stroke-width="0.5"/><path d="M84 34L120 35" stroke="#dcdcdc" stroke-width="0.5"/><path d="M30 20L60 37" stroke="#dcdcdc" stroke-width="0.5"/><path d="M30 20L55 50" stroke="#dcdcdc" stroke-width="0.5"/><rect x="9.0" y="5.5" width="10" height="0.7" fill="#bdbdbd"/><rect x="10.0" y="7" width="8" height="0.6" fill="#cfcfcf"/><rect x="11.0" y="8.4" width="6" height="0.6" fill="#d5d5d5"/><rect x="10.0" y="9.5" width="8" height="0.7" fill="#bdbdbd"/><rect x="11.0" y="11" width="6" height="0.6" fill="#cfcfcf"/><rect x="12.0" y="12.4" width="4" height="0.6" fill="#d5d5d5"/><rect x="19.0" y="9.5" width="12" height="0.7" fill="#bdbdbd"/><rect x="20.0" y="11" width="10" height="0.6" fill="#cfcfcf"/><rect x="21.0" y="12.4" width="8" height="0.6" fill="#d5d5d5"/><rect x="33.0" y="8.5" width="6" height="0.7" fill="#bdbdbd"/><rect x="34.0" y="10" width="4" height="0.6" fill="#cfcfcf"/><rect x="35.0" y="11.4" width="2" height="0.6" fill="#d5d5d5"/><rect x="10.0" y="13.5" width="6" height="0.7" fill="#bdbdbd"/><rect x="11.0" y="15" width="4" height="0.6" fill="#cfcfcf"/><rect x="12.0" y="16.4" width="2" height="0.6" fill="#d5d5d5"/><rect x="8.0" y="17.5" width="6" height="0.7" fill="#bdbdbd"/><rect x="9.0" y="19" width="4" height="0.6" fill="#cfcfcf"/><rect x="10.0" y="20.4" width="2" height="0.6" fill="#d5d5d5"/><rect x="17.0" y="17.5" width="10" height="0.7" fill="#bdbdbd"/><rect x="18.0" y="19" width="8" height="0.6" fill="#cfcfcf"/><rect x="19.0" y="20.4" width="6" height="0.6" fill="#d5d5d5"/><rect x="9.0" y="20.5" width="6" height="0.7" fill="#bdbdbd"/><rect x="10.0" y="22" width="4" height="0.6" fill="#cfcfcf"/><rect x="11.0" y="23.4" width="2" height="0.6" fill="#d5d5d5"/><rect x="18.0" y="21.5" width="8" height="0.7" fill="#bdbdbd"/><rect x="19.0" y="23" width="6" height="0.6" fill="#cfcfcf"/><rect x="20.0" y="24.4" width="4" height="0.6" fill="#d5d5d5"/><rect x="19.0" y="24.5" width="6" height="0.7" fill="#bdbdbd"/><rect x="20.0" y="26" width="4" height="0.6" fill="#cfcfcf"/><rect x="21.0" y="27.4" width="2" height="0.6" fill="#d5d5d5"/><rect x="29.0" y="15.5" width="6" height="0.7" fill="#bdbdbd"/><rect x="30.0" y="17" width="4" height="0.6" fill="#cfcfcf"/><rect x="31.0" y="18.4" width="2" height="0.6" fill="#d5d5d5"/><rect x="25.0" y="19.5" width="12" height="0.7" fill="#bdbdbd"/><rect x="26.0" y="21" width="10" height="0.6" fill="#cfcfcf"/><rect x="27.0" y="22.4" width="8" height="0.6" fill="#d5d5d5"/><rect x="36.0" y="17.5" width="12" height="0.7" fill="#bdbdbd"/><rect x="37.0" y="19" width="10" height="0.6" fill="#cfcfcf"/><rect x="38.0" y="20.4" width="8" height="0.6" fill="#d5d5d5"/><rect x="39.0" y="21.5" width="6" height="0.7" fill="#bdbdbd"/><rect x="40.0" y="23" width="4" height="0.6" fill="#cfcfcf"/><rect x="41.0" y="24.4" width="2" height="0.6" fill="#d5d5d5"/><rect x="49.0" y="19.5" width="8" height="0.7" fill="#bdbdbd"/><rect x="50.0" y="21" width="6" height="0.6" fill="#cfcfcf"/><rect x="51.0" y="22.4" width="4" height="0.6" fill="#d5d5d5"/><rect x="50.0" y="23.5" width="6" height="0.7" fill="#bdbdbd"/><rect x="51.0" y="25" width="4" height="0.6" fill="#cfcfcf"/><rect x="52.0" y="26.4" width="2" height="0.6" fill="#d5d5d5"/><rect x="56.0" y="20.5" width="12" height="0.7" fill="#bdbdbd"/><rect x="57.0" y="22" width="10" height="0.6" fill="#cfcfcf"/><rect x="58.0" y="23.4" width="8" height="0.6" fill="#d5d5d5"/><rect x="70.0" y="18.5" width="6" height="0.7" fill="#bdbdbd"/><rect x="71.0" y="20" width="4" height="0.6" fill="#cfcfcf"/><rect x="72.0" y="21.4" width="2" height="0.6" fill="#d5d5d5"/><rect x="71.0" y="22.5" width="6" height="0.7" fill="#bdbdbd"/><rect x="72.0" y="24" width="4" height="0.6" fill="#cfcfcf"/><rect x="73.0" y="25.4" width="2" height="0.6" fill="#d5d5d5"/><rect x="76.0" y="22.5" width="8" height="0.7" fill="#bdbdbd"/><rect x="77.0" y="24" width="6" height="0.6" fill="#cfcfcf"/><rect x="78.0" y="25.4" width="4" height="0.6" fill="#d5d5d5"/><rect x="59.0" y="27.5" width="6" height="0.7" fill="#bdbdbd"/><rect x="60.0" y="29" width="4" height="0.6" fill="#cfcfcf"/><rect x="61.0" y="30.4" width="2" height="0.6" fill="#d5d5d5"/><rect x="66.0" y="25.5" width="12" height="0.7" fill="#bdbdbd"/><rect x="67.0" y="27" width="10" height="0.6" fill="#cfcfcf"/><rect x="68.0" y="28.4" width="8" height="0.6" fill="#d5d5d5"/><rect x="69.0" y="29.5" width="6" height="0.7" fill="#bdbdbd"/><rect x="70.0" y="31" width="4" height="0.6" fill="#cfcfcf"/><rect x="71.0" y="32.4" width="2" height="0.6" fill="#d5d5d5"/><rect x="76.0" y="28.5" width="8" height="0.7" fill="#bdbdbd"/><rect x="77.0" y="30" width="6" height="0.6" fill="#cfcfcf"/><rect x="78.0" y="31.4" width="4" height="0.6" fill="#d5d5d5"/><rect x="43.0" y="27.5" width="6" height="0.7" fill="#bdbdbd"/><rect x="44.0" y="29" width="4" height="0.6" fill="#cfcfcf"/><rect x="45.0" y="30.4" width="2" height="0.6" fill="#d5d5d5"/><rect x="42.0" y="30.5" width="8" height="0.7" fill="#bdbdbd"/><rect x="43.0" y="32" width="6" height="0.6" fill="#cfcfcf"/><rect x="44.0" y="33.4" width="4" height="0.6" fill="#d5d5d5"/><rect x="54.0" y="31.5" width="10" height="0.7" fill="#bdbdbd"/><rect x="55.0" y="33" width="8" height="0.6" fill="#cfcfcf"/><rect x="56.0" y="34.4" width="6" height="0.6" fill="#d5d5d5"/><rect x="54.0" y="35.5" width="12" height="0.7" fill="#bdbdbd"/><rect x="55.0" y="37" width="10" height="0.6" fill="#cfcfcf"/><rect x="56.0" y="38.4" width="8" height="0.6" fill="#d5d5d5"/><rect x="49.0" y="38.5" width="8" height="0.7" fill="#bdbdbd"/><rect x="50.0" y="40" width="6" height="0.6" fill="#cfcfcf"/><rect x="51.0" y="41.4" width="4" height="0.6" fill="#d5d5d5"/><rect x="69.0" y="35.5" width="6" height="0.7" fill="#bdbdbd"/><rect x="70.0" y="37" width="4" height="0.6" fill="#cfcfcf"/><rect x="71.0" y="38.4" width="2" height="0.6" fill="#d5d5d5"/><rect x="59.0" y="41.5" width="10" height="0.7" fill="#bdbdbd"/><rect x="60.0" y="43" width="8" height="0.6" fill="#cfcfcf"/><rect x="61.0" y="44.4" width="6" height="0.6" fill="#d5d5d5"/><rect x="70.0" y="40.5" width="8" height="0.7" fill="#bdbdbd"/><rect x="71.0" y="42" width="6" height="0.6" fill="#cfcfcf"/><rect x="72.0" y="43.4" width="4" height="0.6" fill="#d5d5d5"/><rect x="79.0" y="40.5" width="6" height="0.7" fill="#bdbdbd"/><rect x="80.0" y="42" width="4" height="0.6" fill="#cfcfcf"/><rect x="81.0" y="43.4" width="2" height="0.6" fill="#d5d5d5"/><rect x="79.0" y="32.5" width="8" height="0.7" fill="#bdbdbd"/><rect x="80.0" y="34" width="6" height="0.6" fill="#cfcfcf"/><rect x="81.0" y="35.4" width="4" height="0.6" fill="#d5d5d5"/><rect x="80.0" y="28.5" width="10" height="0.7" fill="#bdbdbd"/><rect x="81.0" y="30" width="8" height="0.6" fill="#cfcfcf"/><rect x="82.0" y="31.4" width="6" height="0.6" fill="#d5d5d5"/><rect x="92.0" y="27.5" width="6" height="0.7" fill="#bdbdbd"/><rect x="93.0" y="29" width="4" height="0.6" fill="#cfcfcf"/><rect x="94.0" y="30.4" width="2" height="0.6" fill="#d5d5d5"/><rect x="101.0" y="30.5" width="6" height="0.7" fill="#bdbdbd"/><rect x="102.0" y="32" width="4" height="0.6" fill="#cfcfcf"/><rect x="103.0" y="33.4" width="2" height="0.6" fill="#d5d5d5"/><rect x="94.0" y="34.5" width="6" height="0.7" fill="#bdbdbd"/><rect x="95.0" y="36" width="4" height="0.6" fill="#cfcfcf"/><rect x="96.0" y="37.4" width="2" height="0.6" fill="#d5d5d5"/><rect x="102.0" y="34.5" width="8" height="0.7" fill="#bdbdbd"/><rect x="103.0" y="36" width="6" height="0.6" fill="#cfcfcf"/><rect x="104.0" y="37.4" width="4" height="0.6" fill="#d5d5d5"/><rect x="92.0" y="37.5" width="12" height="0.7" fill="#bdbdbd"/><rect x="93.0" y="39" width="10" height="0.6" fill="#cfcfcf"/><rect x="94.0" y="40.4" width="8" height="0.6" fill="#d5d5d5"/><rect x="101.0" y="40.5" width="12" height="0.7" fill="#bdbdbd"/><rect x="102.0" y="42" width="10" height="0.6" fill="#cfcfcf"/><rect x="103.0" y="43.4" width="8" height="0.6" fill="#d5d5d5"/><rect x="103.0" y="43.5" width="10" height="0.7" fill="#bdbdbd"/><rect x="104.0" y="45" width="8" height="0.6" fill="#cfcfcf"/><rect x="105.0" y="46.4" width="6" height="0.6" fill="#d5d5d5"/><rect x="92.0" y="43.5" width="12" height="0.7" fill="#bdbdbd"/><rect x="93.0" y="45" width="10" height="0.6" fill="#cfcfcf"/><rect x="94.0" y="46.4" width="8" height="0.6" fill="#d5d5d5"/><rect x="92.0" y="46.5" width="12" height="0.7" fill="#bdbdbd"/><rect x="93.0" y="48" width="10" height="0.6" fill="#cfcfcf"/><rect x="94.0" y="49.4" width="8" height="0.6" fill="#d5d5d5"/><rect x="114.0" y="18.5" width="10" height="0.7" fill="#bdbdbd"/><rect x="115.0" y="20" width="8" height="0.6" fill="#cfcfcf"/><rect x="116.0" y="21.4" width="6" height="0.6" fill="#d5d5d5"/><rect x="115.0" y="33.5" width="10" height="0.7" fill="#bdbdbd"/><rect x="116.0" y="35" width="8" height="0.6" fill="#cfcfcf"/><rect x="117.0" y="36.4" width="6" height="0.6" fill="#d5d5d5"/><rect x="116.0" y="36.5" width="8" height="0.7" fill="#bdbdbd"/><rect x="117.0" y="38" width="6" height="0.6" fill="#cfcfcf"/><rect x="118.0" y="39.4" width="4" height="0.6" fill="#d5d5d5"/><rect x="120.0" y="44.5" width="8" height="0.7" fill="#bdbdbd"/><rect x="121.0" y="46" width="6" height="0.6" fill="#cfcfcf"/><rect x="122.0" y="47.4" width="4" height="0.6" fill="#d5d5d5"/><rect x="120.0" y="48.5" width="8" height="0.7" fill="#bdbdbd"/><rect x="121.0" y="50" width="6" height="0.6" fill="#cfcfcf"/><rect x="122.0" y="51.4" width="4" height="0.6" fill="#d5d5d5"/><rect x="122.0" y="52.5" width="6" height="0.7" fill="#bdbdbd"/><rect x="123.0" y="54" width="4" height="0.6" fill="#cfcfcf"/><rect x="124.0" y="55.4" width="2" height="0.6" fill="#d5d5d5"/><rect x="86.0" y="52.5" width="10" height="0.7" fill="#bdbdbd"/><rect x="87.0" y="54" width="8" height="0.6" fill="#cfcfcf"/><rect x="88.0" y="55.4" width="6" height="0.6" fill="#d5d5d5"/><rect x="84.0" y="56.5" width="12" height="0.7" fill="#bdbdbd"/><rect x="85.0" y="58" width="10" height="0.6" fill="#cfcfcf"/><rect x="86.0" y="59.4" width="8" height="0.6" fill="#d5d5d5"/><rect x="86.0" y="59.5" width="10" height="0.7" fill="#bdbdbd"/><rect x="87.0" y="61" width="8" height="0.6" fill="#cfcfcf"/><rect x="88.0" y="62.4" width="6" height="0.6" fill="#d5d5d5"/><rect x="85.0" y="63.5" width="12" height="0.7" fill="#bdbdbd"/><rect x="86.0" y="65" width="10" height="0.6" fill="#cfcfcf"/><rect x="87.0" y="66.4" width="8" height="0.6" fill="#d5d5d5"/><rect x="94.0" y="54.5" width="10" height="0.7" fill="#bdbdbd"/><rect x="95.0" y="56" width="8" height="0.6" fill="#cfcfcf"/><rect x="96.0" y="57.4" width="6" height="0.6" fill="#d5d5d5"/><rect x="96.0" y="58.5" width="6" height="0.7" fill="#bdbdbd"/><rect x="97.0" y="60" width="4" height="0.6" fill="#cfcfcf"/><rect x="98.0" y="61.4" width="2" height="0.6" fill="#d5d5d5"/><rect x="105.0" y="55.5" width="6" height="0.7" fill="#bdbdbd"/><rect x="106.0" y="57" width="4" height="0.6" fill="#cfcfcf"/><rect x="107.0" y="58.4" width="2" height="0.6" fill="#d5d5d5"/><rect x="102.0" y="59.5" width="12" height="0.7" fill="#bdbdbd"/><rect x="103.0" y="61" width="10" height="0.6" fill="#cfcfcf"/><rect x="104.0" y="62.4" width="8" height="0.6" fill="#d5d5d5"/><rect x="113.0" y="52.5" width="8" height="0.7" fill="#bdbdbd"/><rect x="114.0" y="54" width="6" height="0.6" fill="#cfcfcf"/><rect x="115.0" y="55.4" width="4" height="0.6" fill="#d5d5d5"/><rect x="112.0" y="58.5" width="10" height="0.7" fill="#bdbdbd"/><rect x="113.0" y="60" width="8" height="0.6" fill="#cfcfcf"/><rect x="114.0" y="61.4" width="6" height="0.6" fill="#d5d5d5"/><rect x="124.0" y="54.5" width="8" height="0.7" fill="#bdbdbd"/><rect x="125.0" y="56" width="6" height="0.6" fill="#cfcfcf"/><rect x="126.0" y="57.4" width="4" height="0.6" fill="#d5d5d5"/><rect x="122.0" y="58.5" width="12" height="0.7" fill="#bdbdbd"/><rect x="123.0" y="60" width="10" height="0.6" fill="#cfcfcf"/><rect x="124.0" y="61.4" width="8" height="0.6" fill="#d5d5d5"/><rect x="134.0" y="55.5" width="12" height="0.7" fill="#bdbdbd"/><rect x="135.0" y="57" width="10" height="0.6" fill="#cfcfcf"/><rect x="136.0" y="58.4" width="8" height="0.6" fill="#d5d5d5"/><rect x="138.0" y="59.5" width="6" height="0.7" fill="#bdbdbd"/><rect x="139.0" y="61" width="4" height="0.6" fill="#cfcfcf"/><rect x="140.0" y="62.4" width="2" height="0.6" fill="#d5d5d5"/><rect x="142.0" y="44.5" width="6" height="0.7" fill="#bdbdbd"/><rect x="143.0" y="46" width="4" height="0.6" fill="#cfcfcf"/><rect x="144.0" y="47.4" width="2" height="0.6" fill="#d5d5d5"/><rect x="147.0" y="44.5" width="10" height="0.7" fill="#bdbdbd"/><rect x="148.0" y="46" width="8" height="0.6" fill="#cfcfcf"/><rect x="149.0" y="47.4" width="6" height="0.6" fill="#d5d5d5"/><rect x="146.0" y="48.5" width="10" height="0.7" fill="#bdbdbd"/><rect x="147.0" y="50" width="8" height="0.6" fill="#cfcfcf"/><rect x="148.0" y="51.4" width="6" height="0.6" fill="#d5d5d5"/><rect x="148.0" y="52.5" width="10" height="0.7" fill="#bdbdbd"/><rect x="149.0" y="54" width="8" height="0.6" fill="#cfcfcf"/><rect x="150.0" y="55.4" width="6" height="0.6" fill="#d5d5d5"/><rect x="145.0" y="55.5" width="12" height="0.7" fill="#bdbdbd"/><rect x="146.0" y="57" width="10" height="0.6" fill="#cfcfcf"/><rect x="147.0" y="58.4" width="8" height="0.6" fill="#d5d5d5"/><rect x="155.0" y="51.5" width="12" height="0.7" fill="#bdbdbd"/><rect x="156.0" y="53" width="10" height="0.6" fill="#cfcfcf"/><rect x="157.0" y="54.4" width="8" height="0.6" fill="#d5d5d5"/><rect x="158.0" y="58.5" width="6" height="0.7" fill="#bdbdbd"/><rect x="159.0" y="60" width="4" height="0.6" fill="#cfcfcf"/><rect x="160.0" y="61.4" width="2" height="0.6" fill="#d5d5d5"/><rect x="100.0" y="62.5" width="6" height="0.7" fill="#bdbdbd"/><rect x="101.0" y="64" width="4" height="0.6" fill="#cfcfcf"/><rect x="102.0" y="65.4" width="2" height="0.6" fill="#d5d5d5"/><rect x="128.0" y="64.5" width="10" height="0.7" fill="#bdbdbd"/><rect x="129.0" y="66" width="8" height="0.6" fill="#cfcfcf"/><rect x="130.0" y="67.4" width="6" height="0.6" fill="#d5d5d5"/></svg>
<div class="a" style="left:725px;top:420px;width:454px;height:123px;border-radius:8px;box-shadow:0 22px 56px rgba(0,0,0,0.32),0 4px 14px rgba(0,0,0,0.10),0 0 0 1px rgba(0,0,0,0.13);background:#f0f0f0;overflow:hidden"><div class="a" style="left:0;top:0;width:454px;height:30px;background:#eef0f4"></div><div class="a" style="left:0;top:30px;width:454px;height:52px;background:#fff"></div><div class="a" style="left:0;top:82px;width:454px;height:1px;background:#e5e5e5"></div></div>
<div class="t " style="left:734px;top:428.84px;font-size:12px;color:#000;">Confirmation</div>
<svg class="a" style="left:1158px;top:429px;" width="11" height="11" viewBox="0 0 11 11"><path d="M0.5 0.5L10.5 10.5M10.5 0.5L0.5 10.5" stroke="#000" stroke-width="1"/></svg>
<svg class="a" style="left:735px;top:460px;" width="32" height="32" viewBox="0 0 32 32"><defs><linearGradient id="qg" x1="0" y1="0" x2="0" y2="1"><stop offset="0" stop-color="#1fa0ec"/><stop offset="1" stop-color="#0862c4"/></linearGradient></defs><circle cx="16" cy="16" r="16" fill="url(#qg)"/><path d="M11.5 12.2c0-2.6 2-4.4 4.6-4.4s4.5 1.7 4.5 4c0 3.3-3.9 3.4-3.9 6.6" fill="none" stroke="#fff" stroke-width="1.8" stroke-linecap="round"/><circle cx="16.7" cy="23.3" r="1.2" fill="#fff"/></svg>
<div class="t " style="left:777px;top:466.84px;font-size:12px;color:#000;transform:scaleX(0.9792);transform-origin:0 0;">Save changes to Project: typeringsadministratie.prj?</div>
<div class="a" style="left:758px;top:512px;width:66px;height:21px;border-radius:4px;background:#fdfdfd;border:1px solid #d0d0d0;border-bottom-color:#bdbdbd"></div>
<div class="t" style="left:758px;width:66px;text-align:center;top:516.84px;font-size:12px;color:#000">Yes</div>
<div class="a" style="left:832px;top:512px;width:66px;height:21px;border-radius:4px;background:#fdfdfd;border:1px solid #0067c0;box-shadow:inset 0 0 0 0.5px #0067c0"></div>
<div class="t" style="left:832px;width:66px;text-align:center;top:516.84px;font-size:12px;color:#000">No</div>
<div class="a" style="left:906px;top:512px;width:82px;height:21px;border-radius:4px;background:#fdfdfd;border:1px solid #d0d0d0;border-bottom-color:#bdbdbd"></div>
<div class="t" style="left:906px;width:82px;text-align:center;top:516.84px;font-size:12px;color:#000">Cancel</div>
<div class="a" style="left:996px;top:512px;width:82px;height:21px;border-radius:4px;background:#fdfdfd;border:1px solid #d0d0d0;border-bottom-color:#bdbdbd"></div>
<div class="t" style="left:996px;width:82px;text-align:center;top:516.84px;font-size:12px;color:#000">No to All</div>
<div class="a" style="left:1086px;top:512px;width:82px;height:21px;border-radius:4px;background:#fdfdfd;border:1px solid #d0d0d0;border-bottom-color:#bdbdbd"></div>
<div class="t" style="left:1086px;width:82px;text-align:center;top:516.84px;font-size:12px;color:#000">Yes to All</div>
<div class="a" style="left:0px;top:1032px;width:1917px;height:47px;background:#1c1c20"></div>
<div class="a" style="left:0px;top:1032px;width:1917px;height:1px;background:#262626"></div>
<svg class="a" style="left:18px;top:1044px;" width="26" height="20" viewBox="0 0 26 20"><defs><radialGradient id="wc" cx="0.35" cy="0.3" r="0.8"><stop offset="0" stop-color="#c8dcf0"/><stop offset="1" stop-color="#6f9cc8"/></radialGradient></defs><circle cx="14" cy="6" r="4" fill="url(#wc)"/><circle cx="20.8" cy="11.8" r="3.3" fill="url(#wc)"/><circle cx="17" cy="16.3" r="3.2" fill="url(#wc)"/><path d="M1 10.1h17M1 13.8h18" stroke="#9fc0e0" stroke-width="1.6"/><path d="M1 12h16" stroke="#1c1c20" stroke-width="1.2"/></svg>
<div class="t " style="left:50.6px;top:1042.84px;font-size:12px;color:#f0f0f0;transform:scaleX(0.8178);transform-origin:0 0;">11°C</div>
<div class="t " style="left:51px;top:1057.84px;font-size:12px;color:#e8e8e8;transform:scaleX(0.9927);transform-origin:0 0;">Veel wind</div>
<svg class="a" style="left:441px;top:1044px;" width="23" height="23" viewBox="0 0 23 23"><defs><linearGradient id="wg" x1="0" y1="0" x2="1" y2="1"><stop offset="0" stop-color="#52c3f7"/><stop offset="1" stop-color="#1a8fe0"/></linearGradient></defs><rect x="0" y="0" width="11" height="11" fill="url(#wg)"/><rect x="12" y="0" width="11" height="11" fill="url(#wg)"/><rect x="0" y="12" width="11" height="11" fill="url(#wg)"/><rect x="12" y="12" width="11" height="11" fill="url(#wg)"/></svg>
<div class="a" style="left:477px;top:1040px;width:220px;height:32px;border-radius:16px;background:#2e2e33;border:1px solid #3c3c40"></div>
<svg class="a" style="left:488px;top:1047px;" width="18" height="18" viewBox="0 0 18 18"><circle cx="8" cy="7.5" r="5.5" fill="none" stroke="#fff" stroke-width="1.6"/><path d="M12 11.5L16.5 16" stroke="#fff" stroke-width="1.8" stroke-linecap="round"/></svg>
<div class="t " style="left:513px;top:1050.00px;font-size:13px;color:#cfcfcf;">Search</div>
<svg class="a" style="left:709px;top:1043px;" width="24" height="24" viewBox="0 0 24 24"><rect x="8" y="3" width="13" height="13" rx="2" fill="#e8e8e8"/><rect x="3" y="8" width="13" height="13" rx="2" fill="#8a8a8a"/><rect x="8" y="8" width="8" height="8" fill="#c8c8c8"/></svg>
<svg class="a" style="left:752px;top:1043px;" width="25" height="24" viewBox="0 0 25 24"><path d="M1 4h9l2 3h12v15H1z" fill="#f3b82a"/><rect x="1" y="9" width="23" height="13" rx="1" fill="#ffd765"/><rect x="6" y="17" width="13" height="3" rx="1" fill="#1e78d0"/></svg>
<svg class="a" style="left:796px;top:1043px;" width="24" height="24" viewBox="0 0 24 24"><circle cx="12" cy="12" r="12" fill="#db4437"/><path d="M12 12L1.6 18A12 12 0 0 1 3.5 3.5z" fill="#0f9d58"/><path d="M12 12L1.6 18A12 12 0 0 0 22.4 18z" fill="#0f9d58"/><path d="M12 12L22.4 18A12 12 0 0 0 24 12 12 12 0 0 0 21 4z" fill="#ffcd40"/><path d="M12 12L12 24A12 12 0 0 0 22.4 18z" fill="#ffcd40"/><circle cx="12" cy="12" r="5.4" fill="#fff"/><circle cx="12" cy="12" r="4.3" fill="#4285f4"/></svg>
<svg class="a" style="left:840px;top:1043px;" width="26" height="24" viewBox="0 0 26 24"><rect x="8" y="3" width="17" height="18" rx="2" fill="#28a8ea"/><rect x="8" y="12" width="17" height="9" fill="#0a64c8"/><rect x="1" y="6" width="13" height="13" rx="2" fill="#0f6cbd"/><circle cx="7.5" cy="12.5" r="3.6" fill="none" stroke="#fff" stroke-width="2"/></svg>
<div class="a" style="left:849.0px;top:1074px;width:6px;height:3px;border-radius:2px;background:#a0a0a0"></div>
<svg class="a" style="left:884px;top:1039px;" width="28" height="28" viewBox="0 0 28 28"><rect x="9" y="8" width="16" height="14" rx="3" fill="#7b83eb"/><rect x="2" y="9" width="14" height="14" rx="2" fill="#5059c9"/><path d="M5 12h8M9 12v8" stroke="#fff" stroke-width="2"/><circle cx="19" cy="6" r="5.5" fill="#2aa845" stroke="#1c1c1c" stroke-width="1"/><path d="M16.5 6l2 2 3-3.5" fill="none" stroke="#fff" stroke-width="1.2"/><rect x="10" y="19" width="15" height="6" rx="1" fill="#2aa845"/><text x="11" y="24" font-family="Liberation Sans" font-size="5" font-weight="bold" fill="#fff">NEW</text></svg>
<div class="a" style="left:893.0px;top:1074px;width:6px;height:3px;border-radius:2px;background:#a0a0a0"></div>
<svg class="a" style="left:928px;top:1043px;" width="25" height="24" viewBox="0 0 25 24"><rect x="7" y="2" width="17" height="20" rx="2" fill="#41a5ee"/><rect x="7" y="12" width="17" height="10" fill="#185abd"/><rect x="1" y="6" width="13" height="13" rx="2" fill="#185abd"/><text x="2.5" y="16.5" font-family="Liberation Sans" font-size="10" font-weight="bold" fill="#fff">W</text></svg>
<svg class="a" style="left:972px;top:1043px;" width="25" height="24" viewBox="0 0 25 24"><rect x="7" y="2" width="17" height="20" rx="2" fill="#33c481"/><rect x="7" y="12" width="17" height="10" fill="#107c41"/><rect x="1" y="6" width="13" height="13" rx="2" fill="#107c41"/><text x="4" y="16.5" font-family="Liberation Sans" font-size="10" font-weight="bold" fill="#fff">X</text></svg>
<svg class="a" style="left:1016px;top:1043px;" width="25" height="24" viewBox="0 0 25 24"><circle cx="14" cy="12" r="10" fill="#ed6c47"/><path d="M14 2A10 10 0 0 1 24 12H14z" fill="#ff8f6b"/><rect x="1" y="6" width="13" height="13" rx="2" fill="#c43e1c"/><text x="4" y="16.5" font-family="Liberation Sans" font-size="10" font-weight="bold" fill="#fff">P</text></svg>
<svg class="a" style="left:1060px;top:1043px;" width="24" height="24" viewBox="0 0 24 24"><circle cx="12" cy="12" r="11.5" fill="#3a76f0"/><circle cx="12" cy="11.5" r="7" fill="#fff"/><path d="M6.5 16.5L5.5 19.5L9 18z" fill="#fff"/></svg>
<div class="a" style="left:1069.0px;top:1074px;width:6px;height:3px;border-radius:2px;background:#a0a0a0"></div>
<svg class="a" style="left:1104px;top:1043px;" width="24" height="24" viewBox="0 0 24 24"><rect x="0" y="0" width="24" height="24" rx="5" fill="#0b0b10"/><path d="M4 8Q6 18 9.5 14Q12 10 14 14Q17 18 20 8" fill="none" stroke="#1f6fff" stroke-width="3.2" stroke-linecap="round"/><path d="M4 16Q7 6 10.5 10Q12.5 13 14 10Q16.5 6 20 16" fill="none" stroke="#22d3a0" stroke-width="2.4" stroke-linecap="round" opacity="0.85"/></svg>
<svg class="a" style="left:1148px;top:1043px;" width="24" height="24" viewBox="0 0 24 24"><circle cx="12" cy="12" r="11.5" fill="#1f6fd8"/><path d="M12 4A8 8 0 1 0 20 12" fill="none" stroke="#fff" stroke-width="2"/><path d="M12 8A4 4 0 1 0 16 12" fill="none" stroke="#fff" stroke-width="2"/></svg>
<svg class="a" style="left:1192px;top:1042px;" width="24" height="25" viewBox="0 0 24 25"><path d="M17 1L7 11 3 8 1 9v7l2 1 4-3 10 10 6-3V4z" fill="#1f9cf0"/><path d="M17 7v11l-7-5.5z" fill="#1c1c1c"/></svg>
<svg class="a" style="left:1237px;top:1042px;" width="22" height="25" viewBox="0 0 22 25"><rect x="2" y="3" width="18" height="21" rx="2" fill="#3aa0e0"/><rect x="4" y="6" width="14" height="16" fill="#c9e8ff"/><path d="M6 10h10M6 13h10M6 16h10M6 19h7" stroke="#3a8fd0" stroke-width="1.3"/><path d="M5 1v4M9 1v4M13 1v4M17 1v4" stroke="#5a5a5a" stroke-width="1.4"/></svg>
<svg class="a" style="left:1280px;top:1042px;" width="25" height="25" viewBox="0 0 25 25"><rect x="2" y="2" width="16" height="16" rx="2" fill="#fff" stroke="#c0392b" stroke-width="1.2" stroke-dasharray="3 2"/><rect x="5" y="5" width="10" height="10" fill="#e74c3c"/><circle cx="17" cy="20" r="3" fill="none" stroke="#19a0ff" stroke-width="1.6"/><path d="M11 23L22 12" stroke="#19a0ff" stroke-width="1.6"/></svg>
<div class="a" style="left:1289.0px;top:1074px;width:6px;height:3px;border-radius:2px;background:#a0a0a0"></div>
<svg class="a" style="left:1324px;top:1043px;" width="24" height="24" viewBox="0 0 24 24"><path d="M0 0h24v24H0z" fill="#21d789"/><path d="M0 0h14L24 10V0z" fill="#fcf84a"/><rect x="4" y="4" width="16" height="16" fill="#000"/><text x="5.5" y="12" font-family="Liberation Sans" font-size="7" font-weight="bold" fill="#fff">PC</text><rect x="6" y="16" width="6" height="1.5" fill="#fff"/></svg>
<div class="a" style="left:1361px;top:1037px;width:39px;height:37px;border-radius:4px;background:#2c2c2c;border:1px solid #353535"></div>
<svg class="a" style="left:1368px;top:1042px;" width="25" height="25" viewBox="0 0 25 25"><circle cx="12.5" cy="3" r="2.6" fill="#a25bd6"/><circle cx="4" cy="8" r="2.6" fill="#3d7be0"/><circle cx="21" cy="8" r="2.6" fill="#e0443a"/><circle cx="4.5" cy="17" r="2.6" fill="#2f9e44"/><circle cx="20.5" cy="17" r="2.6" fill="#f5a623"/><circle cx="12.5" cy="22" r="2.6" fill="#777"/><path d="M12.5 12.5L12.5 3M12.5 12.5L4 8M12.5 12.5L21 8M12.5 12.5L4.5 17M12.5 12.5L20.5 17M12.5 12.5L12.5 22" stroke="#888" stroke-width="1"/><circle cx="12.5" cy="12.5" r="2" fill="#999"/></svg>
<div class="a" style="left:1372.0px;top:1074px;width:16px;height:3px;border-radius:2px;background:#60cdff"></div>
<svg class="a" style="left:1412px;top:1043px;" width="24" height="24" viewBox="0 0 24 24"><circle cx="12" cy="12" r="12" fill="#db4437"/><path d="M12 12L1.6 18A12 12 0 0 1 3.5 3.5z" fill="#0f9d58"/><path d="M12 12L1.6 18A12 12 0 0 0 22.4 18z" fill="#0f9d58"/><path d="M12 12L22.4 18A12 12 0 0 0 24 12 12 12 0 0 0 21 4z" fill="#ffcd40"/><path d="M12 12L12 24A12 12 0 0 0 22.4 18z" fill="#ffcd40"/><circle cx="12" cy="12" r="5.4" fill="#fff"/><circle cx="12" cy="12" r="4.3" fill="#4285f4"/><circle cx="19" cy="4" r="6" fill="#4a6cf7" stroke="#1c1c1c" stroke-width="1"/><path d="M17 4l2 -3 2 3-2 3z" fill="#ff6b6b"/></svg>
<div class="a" style="left:1421.0px;top:1074px;width:6px;height:3px;border-radius:2px;background:#a0a0a0"></div>
<svg class="a" style="left:1456px;top:1043px;" width="24" height="24" viewBox="0 0 24 24"><rect x="1" y="4" width="22" height="14" rx="1" fill="#5ac8fa"/><rect x="1" y="4" width="22" height="14" rx="1" fill="url(#mg)"/><defs><linearGradient id="mg" x1="0" y1="0" x2="0" y2="1"><stop offset="0" stop-color="#7fd4ff"/><stop offset="1" stop-color="#2a8fd8"/></linearGradient></defs><rect x="8" y="19" width="8" height="2" fill="#888"/></svg>
<div class="a" style="left:1465.0px;top:1074px;width:6px;height:3px;border-radius:2px;background:#a0a0a0"></div>
<div class="t" style="right:20px;top:1042.84px;font-size:12px;color:#fff;">10:19</div>
<div class="t" style="right:20px;top:1057.84px;font-size:12px;color:#fff;">9-4-2024</div>
</body></html>
